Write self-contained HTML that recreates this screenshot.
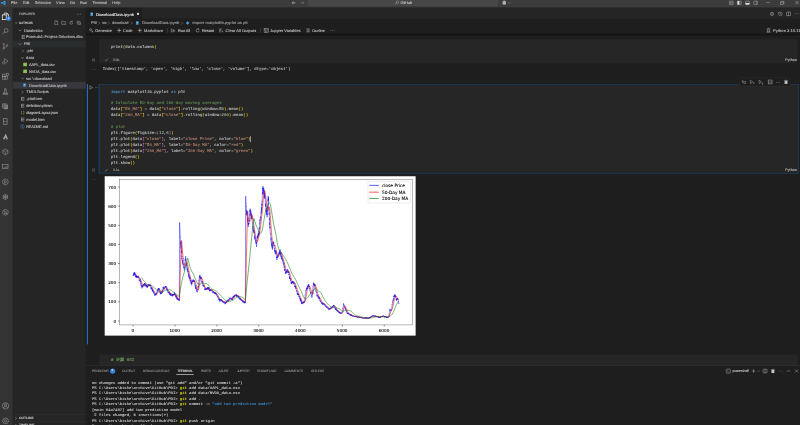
<!DOCTYPE html>
<html lang="en"><head><meta charset="utf-8"><title>DownloadData.ipynb - GitHub - Visual Studio Code</title><style>
html,body{margin:0;padding:0;background:#1e1e1e;overflow:hidden;}
body{width:800px;height:425px;position:relative;}
#app{position:absolute;left:0;top:0;width:2560px;height:1360px;transform:scale(0.3125);transform-origin:0 0;font-family:"Liberation Sans",sans-serif;color:#ccc;overflow:hidden;}
#app div,#app span,#app svg{position:absolute;}
#surface{left:0;top:0;width:2560px;height:1360px;filter:blur(0.4px);}
#app .t{white-space:pre;margin:0;text-rendering:geometricPrecision;-webkit-text-stroke:0.22px currentColor;}
#app .t span{position:static;}
#app .m{font-family:"Liberation Mono",monospace;-webkit-text-stroke-width:0.15px;}
#app .tm{-webkit-text-stroke-width:0.25px;}
#app .dj{font-family:"DejaVu Sans",sans-serif;-webkit-text-stroke-width:0.25px;}
#app .cjk{font-family:"Liberation Mono","Noto Sans CJK SC",monospace;-webkit-text-stroke-width:0.45px;}
#app svg.i{overflow:visible;}
ul,li,figure,header,nav,aside,main,footer,section{margin:0;padding:0;list-style:none;display:block;position:static;}
</style></head><body><div id="app"><div id="surface">
<header id="titlebar">
<div style="left:0px;top:0px;width:2560px;height:25.44px;background:#3c3c3c;"></div>
<svg class="i" viewBox="0 0 16 16" style="left:2.24px;top:1.28px;width:16.64px;height:16.64px;"><path d="M11.6 1.2L5.2 7.1 2.4 5 1.2 5.6v4.8l1.2.6 2.8-2.1 6.4 5.9 3.2-1.4V2.6zM11.6 5v6L7.4 8zM2.4 9.6V6.4L4.2 8z" fill="#2ea3f2"/></svg>
<span class="t" style="left:35.2px;top:-0.88px;font-size:12.6px;line-height:20px;letter-spacing:0.12px;color:#cccccc;">File</span>
<span class="t" style="left:73.28px;top:-0.88px;font-size:12.6px;line-height:20px;letter-spacing:-0.23px;color:#cccccc;">Edit</span>
<span class="t" style="left:111.2px;top:-0.88px;font-size:12.6px;line-height:20px;color:#cccccc;">Selection</span>
<span class="t" style="left:179.2px;top:-0.88px;font-size:12.6px;line-height:20px;letter-spacing:0.43px;color:#cccccc;">View</span>
<span class="t" style="left:224px;top:-0.88px;font-size:12.6px;line-height:20px;letter-spacing:-0.4px;color:#cccccc;">Go</span>
<span class="t" style="left:256px;top:-0.88px;font-size:12.6px;line-height:20px;letter-spacing:-0.35px;color:#cccccc;">Run</span>
<span class="t" style="left:296px;top:-0.88px;font-size:12.6px;line-height:20px;letter-spacing:-0.19px;color:#cccccc;">Terminal</span>
<span class="t" style="left:359.2px;top:-0.88px;font-size:12.6px;line-height:20px;letter-spacing:0.2px;color:#cccccc;">Help</span>
<svg class="i" viewBox="0 0 16 16" style="left:930.56px;top:-0.16px;width:17.92px;height:17.92px;"><path d="M13 8H3.500M7.500 4L3.500 8l4 4" fill="none" stroke="#d4d4d4" stroke-width="1.500"/></svg>
<svg class="i" viewBox="0 0 16 16" style="left:957.76px;top:-0.16px;width:17.92px;height:17.92px;"><path d="M3 8h9.500M8.500 4l4 4-4 4" fill="none" stroke="#858585" stroke-width="1.500"/></svg>
<div style="left:985.6px;top:-6.4px;width:608px;height:26.56px;background:#474747;border-radius:6px;border:1px solid #555;box-sizing:border-box;"></div>
<svg class="i" viewBox="0 0 16 16" style="left:1262.72px;top:1.44px;width:14.72px;height:14.72px;"><circle cx="9.5" cy="6.5" r="4.2" fill="none" stroke="#ccc" stroke-width="1.3"/><path d="M6.5 9.5L2 14" stroke="#ccc" stroke-width="1.4"/></svg>
<span class="t" style="left:1281.92px;top:-0.88px;font-size:12.6px;line-height:20px;letter-spacing:-0.4px;color:#cccccc;">GitHub</span>
<svg class="i" viewBox="0 0 16 16" style="left:1605.44px;top:-0.32px;width:17.28px;height:17.28px;"><path d="M3 7c0-3 2-4.500 5-4.500s5 1.500 5 4.500v4.500c-1.500 1.500-3 2-5 2s-3.500-.5-5-2z" fill="#d0d0d0"/><rect x="5.200" y="7.500" width="1.600" height="2.600" fill="#3c3c3c"/><rect x="9.200" y="7.500" width="1.600" height="2.600" fill="#3c3c3c"/><path d="M3.500 5.500h9" stroke="#3c3c3c" stroke-width="1"/></svg>
<svg class="i" viewBox="0 0 16 16" style="left:1624.64px;top:3.84px;width:10.88px;height:10.88px;"><path d="M3 5.500l5 5 5-5" fill="none" stroke="#bbb" stroke-width="1.600"/></svg>
<svg class="i" viewBox="0 0 16 16" style="left:2332px;top:0.8px;width:16px;height:16px;"><rect x="2" y="2.500" width="12" height="11" rx="1" fill="none" stroke="#bbb" stroke-width="1.200"/><path d="M6 2.500v11M10 2.500v11M2 8h4M10 8h4" stroke="#bbb" stroke-width="1.100"/></svg>
<svg class="i" viewBox="0 0 16 16" style="left:2358.08px;top:0.8px;width:16px;height:16px;"><rect x="2" y="2.500" width="12" height="11" rx="1" fill="none" stroke="#ddd" stroke-width="1.200"/><rect x="2" y="2.500" width="6" height="11" fill="#e4e4e4"/></svg>
<svg class="i" viewBox="0 0 16 16" style="left:2384px;top:0.8px;width:16px;height:16px;"><rect x="2" y="2.500" width="12" height="11" rx="1" fill="none" stroke="#ddd" stroke-width="1.200"/><rect x="2" y="8.500" width="12" height="5" fill="#e4e4e4"/></svg>
<svg class="i" viewBox="0 0 16 16" style="left:2409.92px;top:0.8px;width:16px;height:16px;"><rect x="2" y="2.500" width="12" height="11" rx="1" fill="none" stroke="#ccc" stroke-width="1.200"/><path d="M10 2.500v11" stroke="#ccc" stroke-width="1.200"/></svg>
<div style="left:2450.88px;top:8.16px;width:12.8px;height:1.28px;background:#d0d0d0;"></div>
<svg class="i" viewBox="0 0 16 16" style="left:2495.84px;top:1.6px;width:14.72px;height:14.72px;"><rect x="2.500" y="5" width="8.500" height="8.500" fill="none" stroke="#ccc" stroke-width="1.300"/><path d="M5 5V2.500h8.500V11H11" fill="none" stroke="#ccc" stroke-width="1.300"/></svg>
<svg class="i" viewBox="0 0 16 16" style="left:2542.72px;top:0.96px;width:14.72px;height:14.72px;"><path d="M2.500 2.500l11 11M13.500 2.500l-11 11" stroke="#ddd" stroke-width="1.400"/></svg>
</header>
<nav id="activitybar">
<div style="left:0px;top:24.8px;width:40.96px;height:1335.2px;background:#333333;"></div>
<svg class="i" viewBox="0 0 24 24" style="left:4.48px;top:38.72px;width:26.24px;height:26.24px;"><path d="M9 2.500h7.500l4.500 4.500v11H9z" fill="none" stroke="#fff" stroke-width="2"/><path d="M16 2.500v5h5" fill="none" stroke="#fff" stroke-width="1.600"/><rect x="3" y="8" width="11.500" height="14" fill="#333" stroke="#fff" stroke-width="2"/></svg>
<div style="left:19.84px;top:52.16px;width:15.04px;height:15.04px;background:#3b82e0;border-radius:50%;"></div>
<span class="t" style="left:25.28px;top:49.68px;font-size:6.5px;line-height:20px;color:#fff;">1</span>
<svg class="i" viewBox="0 0 24 24" style="left:5.44px;top:87.9px;width:24.32px;height:24.32px;"><circle cx="14.500" cy="9.500" r="6" fill="none" stroke="#a2a2a2" stroke-width="1.800"/><path d="M10 14l-7 7" stroke="#a2a2a2" stroke-width="2"/></svg>
<svg class="i" viewBox="0 0 24 24" style="left:5.44px;top:136.13px;width:24.32px;height:24.32px;"><circle cx="7" cy="5" r="2.300" fill="none" stroke="#a2a2a2" stroke-width="1.600"/><circle cx="7" cy="19" r="2.300" fill="none" stroke="#a2a2a2" stroke-width="1.600"/><circle cx="17.500" cy="9" r="2.300" fill="none" stroke="#a2a2a2" stroke-width="1.600"/><path d="M7 7.300v9.400M17.500 11.300c0 4-10.500 2-10.500 5.400" fill="none" stroke="#a2a2a2" stroke-width="1.600"/></svg>
<svg class="i" viewBox="0 0 24 24" style="left:5.44px;top:184.35px;width:24.32px;height:24.32px;"><path d="M9 3.500l11.500 8L12 17.500" fill="none" stroke="#a2a2a2" stroke-width="1.700"/><path d="M9 3.500v7" stroke="#a2a2a2" stroke-width="1.700"/><circle cx="7" cy="16.500" r="4" fill="none" stroke="#a2a2a2" stroke-width="1.700"/></svg>
<svg class="i" viewBox="0 0 24 24" style="left:5.44px;top:232.58px;width:24.32px;height:24.32px;"><rect x="3" y="12" width="8" height="8" fill="none" stroke="#a2a2a2" stroke-width="1.600"/><rect x="11" y="12" width="8" height="8" fill="none" stroke="#a2a2a2" stroke-width="1.600"/><rect x="3" y="4" width="8" height="8" fill="none" stroke="#a2a2a2" stroke-width="1.600"/><rect x="14.500" y="1.500" width="7" height="7" fill="none" stroke="#a2a2a2" stroke-width="1.600"/></svg>
<svg class="i" viewBox="0 0 24 24" style="left:5.44px;top:280.8px;width:24.32px;height:24.32px;"><path d="M9 3h6M10 3v7L4.500 20.500h15L14 10V3" fill="none" stroke="#a2a2a2" stroke-width="1.800"/><path d="M6 17h12" stroke="#a2a2a2" stroke-width="2.500"/></svg>
<svg class="i" viewBox="0 0 24 24" style="left:5.44px;top:329.02px;width:24.32px;height:24.32px;"><rect x="7.500" y="7" width="13" height="13" rx="1" fill="#a2a2a2" opacity=".55"/><rect x="5" y="5" width="13" height="13" rx="1" fill="none" stroke="#a2a2a2" stroke-width="1.500"/><path d="M3 16V3h13" fill="none" stroke="#a2a2a2" stroke-width="1.500"/></svg>
<svg class="i" viewBox="0 0 24 24" style="left:5.44px;top:377.25px;width:24.32px;height:24.32px;"><rect x="6.500" y="3" width="11" height="18" fill="none" stroke="#a2a2a2" stroke-width="1.700"/><path d="M6.500 12h11" stroke="#a2a2a2" stroke-width="1.500"/></svg>
<svg class="i" viewBox="0 0 24 24" style="left:5.44px;top:425.47px;width:24.32px;height:24.32px;"><path d="M13 3L4 20.500h5.500l3-6 3.500 4-5 2h9.500L13.500 3z" fill="#a2a2a2"/></svg>
<svg class="i" viewBox="0 0 24 24" style="left:5.44px;top:473.7px;width:24.32px;height:24.32px;"><path d="M12 3l8 4.500v9L12 21l-8-4.500v-9z" fill="none" stroke="#a2a2a2" stroke-width="1.700"/><path d="M4 7.500l8 4.500 8-4.500M12 12v9" fill="none" stroke="#a2a2a2" stroke-width="1.300"/></svg>
<svg class="i" viewBox="0 0 24 24" style="left:5.44px;top:521.92px;width:24.32px;height:24.32px;"><rect x="3.500" y="5" width="17" height="12.500" fill="none" stroke="#a2a2a2" stroke-width="1.600"/><path d="M8 15v-2M11 15v-4M14 15v-3M17 15V8.500" stroke="#a2a2a2" stroke-width="1.700"/></svg>
<svg class="i" viewBox="0 0 24 24" style="left:5.44px;top:570.14px;width:24.32px;height:24.32px;"><circle cx="12" cy="12" r="9" fill="none" stroke="#a2a2a2" stroke-width="1.600"/><path d="M9.500 7l7 5-7 5z" fill="none" stroke="#a2a2a2" stroke-width="1.500"/></svg>
<svg class="i" viewBox="0 0 24 24" style="left:5.44px;top:618.37px;width:24.32px;height:24.32px;"><path d="M12 2.500v19M3.800 7.200l16.400 9.600M3.800 16.800l16.400-9.600M9 3.500l3 3 3-3M9 20.500l3-3 3 3M3.500 11l3.800-1-1-3.800M20.500 13l-3.800 1 1 3.800M3.500 13l3.800 1-1 3.800M20.500 11l-3.800-1 1-3.800" fill="none" stroke="#a2a2a2" stroke-width="1.600"/></svg>
<svg class="i" viewBox="0 0 24 24" style="left:5.44px;top:666.59px;width:24.32px;height:24.32px;"><circle cx="12" cy="12" r="9" fill="none" stroke="#a2a2a2" stroke-width="1.600"/><path d="M9 7l7 5-7 5z" fill="none" stroke="#a2a2a2" stroke-width="1.500"/><path d="M13 15h5v3h-5z" fill="#a2a2a2"/></svg>
<svg class="i" viewBox="0 0 24 24" style="left:4.8px;top:1285.6px;width:25.6px;height:25.6px;"><circle cx="12" cy="12" r="9.500" fill="none" stroke="#a2a2a2" stroke-width="1.600"/><circle cx="12" cy="9.500" r="3.300" fill="none" stroke="#a2a2a2" stroke-width="1.600"/><path d="M5.500 18.500c1.500-3.500 4-4.500 6.500-4.500s5 1 6.500 4.500" fill="none" stroke="#a2a2a2" stroke-width="1.600"/></svg>
<svg class="i" viewBox="0 0 24 24" style="left:4.8px;top:1334.4px;width:25.6px;height:25.6px;"><circle cx="12" cy="12" r="3.200" fill="none" stroke="#a2a2a2" stroke-width="1.600"/><path d="M12 2.500l2 2.600 3.200-.8 .8 3.200 3 1.300-1.400 3.200 1.400 3.200-3 1.300-.8 3.200-3.200-.8-2 2.600-2-2.600-3.200.8-.8-3.200-3-1.300L4.400 12 3 8.800l3-1.300.8-3.200 3.200.8z" fill="none" stroke="#a2a2a2" stroke-width="1.500"/></svg>
</nav>
<aside id="sidebar">
<div style="left:40.96px;top:24.8px;width:234.24px;height:1335.2px;background:#252526;"></div>
<span class="t" style="left:60.8px;top:35.12px;font-size:10.7px;line-height:20px;letter-spacing:-0.88px;color:#bbbbbb;">EXPLORER</span>
<svg class="i" viewBox="0 0 16 16" style="left:244px;top:37.12px;width:16px;height:16px;"><circle cx="3" cy="8" r="1.200" fill="#c5c5c5"/><circle cx="8" cy="8" r="1.200" fill="#c5c5c5"/><circle cx="13" cy="8" r="1.200" fill="#c5c5c5"/></svg>
<svg class="i" viewBox="0 0 16 16" style="left:44px;top:64.96px;width:16px;height:16px;"><path d="M3.500 5.800l4.500 4.500 4.500-4.500" fill="none" stroke="#c5c5c5" stroke-width="1.300"/></svg>
<span class="t" style="left:61.12px;top:62.96px;font-size:10.7px;line-height:20px;letter-spacing:0.44px;color:#cccccc;font-weight:bold;">GITHUB</span>
<svg class="i" viewBox="0 0 16 16" style="left:172px;top:64.96px;width:16px;height:16px;"><path d="M9.500 1.500H3.500v12h5M9.500 1.500l3 3v4M9.500 1.500v3h3" fill="none" stroke="#d8d8d8" stroke-width="1.100"/><path d="M12 10v5M9.500 12.500h5" stroke="#d8d8d8" stroke-width="1.100"/></svg>
<svg class="i" viewBox="0 0 16 16" style="left:196px;top:64.96px;width:16px;height:16px;"><path d="M14 9V4.500H7.500l-1-1.500H1.500v10h8" fill="none" stroke="#d8d8d8" stroke-width="1.100"/><path d="M12.500 10v5M10 12.500h5" stroke="#d8d8d8" stroke-width="1.100"/></svg>
<svg class="i" viewBox="0 0 16 16" style="left:220px;top:64.96px;width:16px;height:16px;"><path d="M12.500 8a4.500 4.500 0 1 1-1.500-3.400" fill="none" stroke="#d8d8d8" stroke-width="1.200"/><path d="M11.500 1.500v3.500H8" fill="none" stroke="#d8d8d8" stroke-width="1.200"/></svg>
<svg class="i" viewBox="0 0 16 16" style="left:244px;top:64.96px;width:16px;height:16px;"><path d="M5.500 5.500h8v8h-8z" fill="none" stroke="#d8d8d8" stroke-width="1.100"/><path d="M3 10.500V3h7.500" fill="none" stroke="#d8d8d8" stroke-width="1.100"/><path d="M7.500 9.500h4" stroke="#d8d8d8" stroke-width="1.100"/></svg>
<div style="left:40.96px;top:129.63px;width:234.24px;height:22.02px;background:#2a2d2e;"></div>
<div style="left:40.96px;top:261.63px;width:234.24px;height:22.02px;background:#37373d;"></div>
<ul class="tree">
<li>
<svg class="i" viewBox="0 0 16 16" style="left:56px;top:88.64px;width:16px;height:16px;"><path d="M3.500 5.800l4.500 4.500 4.500-4.500" fill="none" stroke="#c5c5c5" stroke-width="1.300"/></svg>
<span class="t" style="left:76.8px;top:86.64px;font-size:12.6px;line-height:20px;letter-spacing:-0.03px;color:#cccccc;">Databricks</span>
</li>
<li>
<svg class="i" viewBox="0 0 16 16" style="left:65.6px;top:110.32px;width:16.64px;height:16.64px;"><path d="M4 3.500h9.500M4 8h9.500M4 12.500h9.500" stroke="#c8cbca" stroke-width="1.500"/><path d="M4.600 3v10" stroke="#c8cbca" stroke-width="1.400"/></svg>
<span class="t" style="left:83.2px;top:108.64px;font-size:12.6px;line-height:20px;letter-spacing:0.17px;color:#cccccc;">Formula1-Project-Solutions.dbc</span>
</li>
<li>
<svg class="i" viewBox="0 0 16 16" style="left:56px;top:132.64px;width:16px;height:16px;"><path d="M3.500 5.800l4.500 4.500 4.500-4.500" fill="none" stroke="#c5c5c5" stroke-width="1.300"/></svg>
<span class="t" style="left:76.8px;top:130.64px;font-size:12.6px;line-height:20px;letter-spacing:-0.7px;color:#cccccc;">PBI</span>
</li>
<li>
<svg class="i" viewBox="0 0 16 16" style="left:64.64px;top:154.64px;width:16px;height:16px;"><path d="M5.800 3.500l4.500 4.500-4.500 4.500" fill="none" stroke="#c5c5c5" stroke-width="1.300"/></svg>
<span class="t" style="left:84px;top:152.64px;font-size:12.6px;line-height:20px;letter-spacing:0.32px;color:#cccccc;">.pbi</span>
</li>
<li>
<svg class="i" viewBox="0 0 16 16" style="left:64px;top:176.64px;width:16px;height:16px;"><path d="M3.500 5.800l4.500 4.500 4.500-4.500" fill="none" stroke="#c5c5c5" stroke-width="1.300"/></svg>
<span class="t" style="left:83.2px;top:174.64px;font-size:12.6px;line-height:20px;letter-spacing:0.7px;color:#cccccc;">data</span>
</li>
<li>
<svg class="i" viewBox="0 0 16 16" style="left:72.64px;top:199.28px;width:14.72px;height:14.72px;"><rect x="1.500" y="2" width="13" height="12" fill="#86b84a"/><path d="M1.500 6h13M1.500 10h13M6 2v12M10.500 2v12" stroke="#a5d566" stroke-width=".8"/></svg>
<span class="t" style="left:92.8px;top:196.64px;font-size:12.6px;line-height:20px;letter-spacing:-0.33px;color:#cccccc;">AAPL_data.csv</span>
</li>
<li>
<svg class="i" viewBox="0 0 16 16" style="left:72.64px;top:221.28px;width:14.72px;height:14.72px;"><rect x="1.500" y="2" width="13" height="12" fill="#86b84a"/><path d="M1.500 6h13M1.500 10h13M6 2v12M10.500 2v12" stroke="#a5d566" stroke-width=".8"/></svg>
<span class="t" style="left:92.8px;top:218.64px;font-size:12.6px;line-height:20px;letter-spacing:-0.22px;color:#cccccc;">NVDA_data.csv</span>
</li>
<li>
<svg class="i" viewBox="0 0 16 16" style="left:64px;top:242.64px;width:16px;height:16px;"><path d="M3.500 5.800l4.500 4.500 4.500-4.500" fill="none" stroke="#c5c5c5" stroke-width="1.300"/></svg>
<span class="t" style="left:83.2px;top:240.64px;font-size:12.6px;line-height:20px;letter-spacing:0.05px;color:#cccccc;">src \ download</span>
</li>
<li>
<svg class="i" viewBox="0 0 16 16" style="left:72.16px;top:266.08px;width:13.12px;height:13.12px;"><rect x="3" y="1.500" width="10" height="13" rx="1.500" fill="#4a97d2"/><rect x="5.500" y="4" width="5" height="3" fill="#b5d6ef"/></svg>
<span class="t" style="left:92.8px;top:262.64px;font-size:12.6px;line-height:20px;letter-spacing:0.28px;color:#cccccc;">DownloadData.ipynb</span>
</li>
<li>
<svg class="i" viewBox="0 0 16 16" style="left:64px;top:286.64px;width:16px;height:16px;"><path d="M5.800 3.500l4.500 4.500-4.500 4.500" fill="none" stroke="#c5c5c5" stroke-width="1.300"/></svg>
<span class="t" style="left:84px;top:284.64px;font-size:12.6px;line-height:20px;letter-spacing:-0.07px;color:#cccccc;">TMDLScripts</span>
</li>
<li>
<svg class="i" viewBox="0 0 16 16" style="left:64.32px;top:308.32px;width:16.64px;height:16.64px;"><path d="M4 3.500h9.500M4 8h9.500M4 12.500h9.500" stroke="#c8cbca" stroke-width="1.500"/><path d="M4.600 3v10" stroke="#c8cbca" stroke-width="1.400"/></svg>
<span class="t" style="left:84px;top:306.64px;font-size:12.6px;line-height:20px;letter-spacing:0.33px;color:#cccccc;">.platform</span>
</li>
<li>
<svg class="i" viewBox="0 0 16 16" style="left:64.32px;top:330.32px;width:16.64px;height:16.64px;"><path d="M4 3.500h9.500M4 8h9.500M4 12.500h9.500" stroke="#c8cbca" stroke-width="1.500"/><path d="M4.600 3v10" stroke="#c8cbca" stroke-width="1.400"/></svg>
<span class="t" style="left:84px;top:328.64px;font-size:12.6px;line-height:20px;letter-spacing:-0.22px;color:#cccccc;">definition.pbism</span>
</li>
<li>
<svg class="i" viewBox="0 0 16 16" style="left:64.64px;top:353.28px;width:14.72px;height:14.72px;"><path d="M6 2.500c-2 0-2 1-2 2.500s0 2.500-1.500 3c1.500.5 1.500 1.500 1.500 3s0 2.500 2 2.500M10 2.500c2 0 2 1 2 2.500s0 2.500 1.500 3c-1.500.5-1.500 1.500-1.500 3s0 2.500-2 2.500" fill="none" stroke="#cbcb41" stroke-width="1.600"/></svg>
<span class="t" style="left:84px;top:350.64px;font-size:12.6px;line-height:20px;letter-spacing:-0.5px;color:#cccccc;">diagramLayout.json</span>
</li>
<li>
<svg class="i" viewBox="0 0 16 16" style="left:64.32px;top:374.32px;width:16.64px;height:16.64px;"><path d="M4 3.500h9.500M4 8h9.500M4 12.500h9.500" stroke="#c8cbca" stroke-width="1.500"/><path d="M4.600 3v10" stroke="#c8cbca" stroke-width="1.400"/></svg>
<span class="t" style="left:84px;top:372.64px;font-size:12.6px;line-height:20px;letter-spacing:0.07px;color:#cccccc;">model.bim</span>
</li>
<li>
<svg class="i" viewBox="0 0 16 16" style="left:63.68px;top:396.96px;width:15.36px;height:15.36px;"><circle cx="8" cy="8" r="6" fill="none" stroke="#4fa0dc" stroke-width="1.300"/><path d="M8 7v4.500" stroke="#4fa0dc" stroke-width="1.500"/><circle cx="8" cy="4.800" r=".9" fill="#4fa0dc"/></svg>
<span class="t" style="left:84px;top:394.64px;font-size:12.6px;line-height:20px;letter-spacing:-0.7px;color:#cccccc;">README.md</span>
</li>
</ul>
<div style="left:40.96px;top:1326.08px;width:234.24px;height:0.96px;background:#3c3c3c;"></div>
<svg class="i" viewBox="0 0 16 16" style="left:42.88px;top:1331.2px;width:16px;height:16px;"><path d="M5.800 3.500l4.500 4.500-4.500 4.500" fill="none" stroke="#c5c5c5" stroke-width="1.300"/></svg>
<span class="t" style="left:60.8px;top:1329.2px;font-size:10.7px;line-height:20px;letter-spacing:0.03px;color:#cccccc;font-weight:bold;">OUTLINE</span>
<div style="left:40.96px;top:1348.16px;width:234.24px;height:0.96px;background:#3c3c3c;"></div>
<svg class="i" viewBox="0 0 16 16" style="left:42.88px;top:1353.28px;width:16px;height:16px;"><path d="M5.800 3.500l4.500 4.500-4.500 4.500" fill="none" stroke="#c5c5c5" stroke-width="1.300"/></svg>
<span class="t" style="left:60.8px;top:1351.28px;font-size:10.7px;line-height:20px;color:#cccccc;font-weight:bold;">TIMELINE</span>
</aside>
<main id="editor">
<div style="left:275.2px;top:24.8px;width:2284.8px;height:1335.2px;background:#1e1e1e;"></div>
<div style="left:275.2px;top:24.8px;width:2284.8px;height:35.2px;background:#252526;"></div>
<div style="left:275.84px;top:24.8px;width:178.56px;height:35.2px;background:#1e1e1e;"></div>
<svg class="i" viewBox="0 0 16 16" style="left:286.56px;top:38.56px;width:13.12px;height:13.12px;"><rect x="3" y="1.500" width="10" height="13" rx="1.500" fill="#4a97d2"/><rect x="5.500" y="4" width="5" height="3" fill="#b5d6ef"/></svg>
<span class="t" style="left:306.88px;top:36.88px;font-size:12.6px;line-height:20px;letter-spacing:0.31px;color:#f0f0f0;-webkit-text-stroke-width:0.3px;">DownloadData.ipynb</span>
<div style="left:437.6px;top:41.12px;width:7.36px;height:7.36px;background:#e4e4e4;border-radius:50%;"></div>
<svg class="i" viewBox="0 0 16 16" style="left:2462.4px;top:35.68px;width:16.64px;height:16.64px;"><circle cx="8" cy="8.500" r="5" fill="none" stroke="#c5c5c5" stroke-width="1.300"/><circle cx="8" cy="8.500" r="1.800" fill="#c5c5c5"/><path d="M8 1.500v2.500" stroke="#c5c5c5" stroke-width="1.500"/></svg>
<svg class="i" viewBox="0 0 16 16" style="left:2488.96px;top:35.68px;width:16.64px;height:16.64px;"><path d="M3.200 5.500A5.500 5.500 0 1 1 2.500 8.500" fill="none" stroke="#c5c5c5" stroke-width="1.300"/><path d="M1.500 2.500v3.500h3.500" fill="none" stroke="#c5c5c5" stroke-width="1.300"/><path d="M8 5v3.500l2.500 1.500" fill="none" stroke="#c5c5c5" stroke-width="1.200"/></svg>
<svg class="i" viewBox="0 0 16 16" style="left:2514.88px;top:35.68px;width:16.64px;height:16.64px;"><rect x="2" y="2.500" width="12" height="11" rx="1" fill="none" stroke="#c5c5c5" stroke-width="1.300"/><path d="M8 2.500v11" stroke="#c5c5c5" stroke-width="1.300"/></svg>
<svg class="i" viewBox="0 0 16 16" style="left:2542.08px;top:36px;width:16px;height:16px;"><circle cx="3" cy="8" r="1.100" fill="#c5c5c5"/><circle cx="8" cy="8" r="1.100" fill="#c5c5c5"/><circle cx="13" cy="8" r="1.100" fill="#c5c5c5"/></svg>
<span class="t" style="left:291.2px;top:63.28px;font-size:12.6px;line-height:20px;letter-spacing:-0.7px;color:#a9a9a9;-webkit-text-stroke-width:0.3px;">PBI</span>
<svg class="i" viewBox="0 0 16 16" style="left:308.8px;top:65.6px;width:16px;height:16px;"><path d="M5.800 3.500l4.500 4.500-4.500 4.500" fill="none" stroke="#9a9a9a" stroke-width="1.300"/></svg>
<span class="t" style="left:326.08px;top:63.28px;font-size:12.6px;line-height:20px;letter-spacing:-0.7px;color:#a9a9a9;-webkit-text-stroke-width:0.3px;">src</span>
<svg class="i" viewBox="0 0 16 16" style="left:340.48px;top:65.6px;width:16px;height:16px;"><path d="M5.800 3.500l4.500 4.500-4.500 4.500" fill="none" stroke="#9a9a9a" stroke-width="1.300"/></svg>
<span class="t" style="left:358.08px;top:63.28px;font-size:12.6px;line-height:20px;letter-spacing:-0.1px;color:#a9a9a9;-webkit-text-stroke-width:0.3px;">download</span>
<svg class="i" viewBox="0 0 16 16" style="left:413.12px;top:65.6px;width:16px;height:16px;"><path d="M5.800 3.500l4.500 4.500-4.500 4.500" fill="none" stroke="#9a9a9a" stroke-width="1.300"/></svg>
<svg class="i" viewBox="0 0 16 16" style="left:432.8px;top:66.72px;width:13.12px;height:13.12px;"><rect x="3" y="1.500" width="10" height="13" rx="1.500" fill="#4a97d2"/><rect x="5.500" y="4" width="5" height="3" fill="#b5d6ef"/></svg>
<span class="t" style="left:454.08px;top:63.28px;font-size:12.6px;line-height:20px;letter-spacing:0.17px;color:#a9a9a9;-webkit-text-stroke-width:0.3px;">DownloadData.ipynb</span>
<svg class="i" viewBox="0 0 16 16" style="left:574.08px;top:65.6px;width:16px;height:16px;"><path d="M5.800 3.500l4.500 4.500-4.500 4.500" fill="none" stroke="#9a9a9a" stroke-width="1.300"/></svg>
<svg class="i" viewBox="0 0 16 16" style="left:592.64px;top:65.92px;width:14.72px;height:14.72px;"><path d="M8 2l6 6-6 6-6-6z" fill="#4fa0dc"/></svg>
<span class="t" style="left:616px;top:63.28px;font-size:12.6px;line-height:20px;letter-spacing:0.44px;color:#a9a9a9;-webkit-text-stroke-width:0.3px;">import matplotlib.pyplot as plt</span>
<svg class="i" viewBox="0 0 16 16" style="left:284.48px;top:88.96px;width:16.64px;height:16.64px;"><path d="M6 1.500l1.300 3.200 3.200 1.300-3.200 1.300L6 10.500 4.700 7.300 1.500 6l3.200-1.300z" fill="none" stroke="#cccccc" stroke-width="1.100"/><path d="M11.500 9l.9 2.100 2.100.9-2.100.9-.9 2.100-.9-2.100-2.100-.9 2.100-.9z" fill="#cccccc"/></svg>
<span class="t" style="left:304.8px;top:87.28px;font-size:12.6px;line-height:20px;letter-spacing:0.09px;color:#cccccc;">Generate</span>
<svg class="i" viewBox="0 0 16 16" style="left:372.8px;top:88.96px;width:16.64px;height:16.64px;"><path d="M8 2v12M2 8h12" stroke="#dcdcdc" stroke-width="1.600"/></svg>
<span class="t" style="left:393.92px;top:87.28px;font-size:12.6px;line-height:20px;color:#cccccc;">Code</span>
<svg class="i" viewBox="0 0 16 16" style="left:438.88px;top:88.96px;width:16.64px;height:16.64px;"><path d="M8 2v12M2 8h12" stroke="#dcdcdc" stroke-width="1.600"/></svg>
<span class="t" style="left:460.8px;top:87.28px;font-size:12.6px;line-height:20px;letter-spacing:0.37px;color:#cccccc;">Markdown</span>
<div style="left:535.52px;top:89.92px;width:0.96px;height:15.04px;background:#6a6a6a;"></div>
<svg class="i" viewBox="0 0 16 16" style="left:545.92px;top:88.64px;width:17.28px;height:17.28px;"><path d="M2 3l6 5-6 5z" fill="none" stroke="#cccccc" stroke-width="1.200"/><path d="M8.500 5.500l5 3.500-5 3.500z" fill="none" stroke="#cccccc" stroke-width="1.100"/></svg>
<span class="t" style="left:569.6px;top:87.28px;font-size:12.6px;line-height:20px;letter-spacing:-0.22px;color:#cccccc;">Run All</span>
<svg class="i" viewBox="0 0 16 16" style="left:623.68px;top:88.96px;width:16.64px;height:16.64px;"><path d="M12.800 8a4.800 4.800 0 1 1-1.600-3.600" fill="none" stroke="#cccccc" stroke-width="1.300"/><path d="M11.800 1.200v3.600H8.200" fill="none" stroke="#cccccc" stroke-width="1.300"/></svg>
<span class="t" style="left:646.08px;top:87.28px;font-size:12.6px;line-height:20px;letter-spacing:-0.27px;color:#cccccc;">Restart</span>
<svg class="i" viewBox="0 0 16 16" style="left:698.88px;top:88.96px;width:16.64px;height:16.64px;"><path d="M2 3.500h8M2 6.500h8M2 9.500h5M2 12.500h5" stroke="#cccccc" stroke-width="1.300"/><path d="M9.500 9l4.500 4.500M14 9l-4.500 4.500" stroke="#cccccc" stroke-width="1.200"/></svg>
<span class="t" style="left:721.92px;top:87.28px;font-size:12.6px;line-height:20px;letter-spacing:0.21px;color:#cccccc;">Clear All Outputs</span>
<div style="left:832.32px;top:89.92px;width:0.96px;height:15.04px;background:#6a6a6a;"></div>
<svg class="i" viewBox="0 0 16 16" style="left:843.36px;top:88.64px;width:17.28px;height:17.28px;"><rect x="2" y="2" width="12" height="12" fill="none" stroke="#cccccc" stroke-width="1.200"/><path d="M2 5.500h12M6.500 5.500V14M6.500 9.800H14" stroke="#cccccc" stroke-width="1.100"/></svg>
<span class="t" style="left:864.8px;top:87.28px;font-size:12.6px;line-height:20px;letter-spacing:0.04px;color:#cccccc;">Jupyter Variables</span>
<svg class="i" viewBox="0 0 16 16" style="left:977.28px;top:88.96px;width:16.64px;height:16.64px;"><path d="M2.500 3.500h11M5 6.500h8.500M5 9.500h8.500M2.500 12.500h11" stroke="#cccccc" stroke-width="1.300"/></svg>
<span class="t" style="left:999.2px;top:87.28px;font-size:12.6px;line-height:20px;letter-spacing:0.13px;color:#cccccc;">Outline</span>
<svg class="i" viewBox="0 0 16 16" style="left:1056px;top:89.28px;width:16px;height:16px;"><circle cx="3" cy="8" r="1.100" fill="#cccccc"/><circle cx="8" cy="8" r="1.100" fill="#cccccc"/><circle cx="13" cy="8" r="1.100" fill="#cccccc"/></svg>
<svg class="i" viewBox="0 0 16 16" style="left:2450.88px;top:89.28px;width:16.64px;height:16.64px;"><rect x="4" y="2" width="8" height="8" rx="1" fill="none" stroke="#cccccc" stroke-width="1.300"/><path d="M2 13.500h12M5 10v3.500M11 10v3.500" stroke="#cccccc" stroke-width="1.300"/><path d="M6 4.500h4" stroke="#cccccc" stroke-width="1.100"/></svg>
<span class="t" style="left:2473.92px;top:87.6px;font-size:12.6px;line-height:20px;letter-spacing:0.3px;color:#cccccc;">Python 3.10.11</span>
<div style="left:275.2px;top:107.52px;width:2284.8px;height:8.32px;background:linear-gradient(#0f0f0f,rgba(30,30,30,0));"></div>
<section class="cell">
<div style="left:316.8px;top:125.12px;width:2235.2px;height:77.44px;background:#262627;"></div>
<div class="t m" style="left:354.88px;top:139.6px;font-size:12.83px;line-height:20px;"><span style="color:#d4d4d4">print</span><span style="color:#ffd700">(</span><span style="color:#d4d4d4">data</span><span style="color:#d4d4d4">.columns</span><span style="color:#ffd700">)</span></div>
<span class="t" style="left:293.6px;top:181.2px;font-size:10.8px;line-height:20px;letter-spacing:-0.7px;color:#6c6c6c;-webkit-text-stroke-width:0.2px;">[6]</span>
<svg class="i" viewBox="0 0 16 16" style="left:333.44px;top:183.68px;width:14.72px;height:14.72px;"><path d="M2.500 8.500l3.500 3.500 7.500-8" fill="none" stroke="#b8b8b8" stroke-width="1.400"/></svg>
<span class="t" style="left:361.6px;top:181.2px;font-size:11.6px;line-height:20px;letter-spacing:-0.48px;color:#a6a6a6;">0.0s</span>
<span class="t" style="left:2512.8px;top:181.2px;font-size:11.6px;line-height:20px;letter-spacing:0.19px;color:#cccccc;">Python</span>
<svg class="i" viewBox="0 0 16 16" style="left:292.16px;top:214.08px;width:14.72px;height:14.72px;"><circle cx="2.500" cy="8" r="1" fill="#9a9a9a"/><circle cx="8" cy="8" r="1" fill="#9a9a9a"/><circle cx="13.500" cy="8" r="1" fill="#9a9a9a"/></svg>
<div class="t m" style="left:328.8px;top:212.08px;font-size:12.83px;line-height:20px;"><span style="color:#cccccc">Index(['timestamp', 'open', 'high', 'low', 'close', 'volume'], dtype='object')</span></div>
</section>
<section class="cell focused">
<div style="left:277.6px;top:269.12px;width:3.68px;height:832.96px;background:#2f7fd0;"></div>
<div style="left:316.8px;top:269.12px;width:2238.72px;height:285.44px;background:#262627;"></div>
<div style="left:316.8px;top:268.64px;width:2238.72px;height:1.44px;background:#0f5ea8;"></div>
<div style="left:316.8px;top:553.6px;width:2238.72px;height:1.44px;background:#0f5ea8;"></div>
<div style="left:316.32px;top:268.64px;width:1.44px;height:286.4px;background:#0f5ea8;"></div>
<div style="left:2554.56px;top:268.64px;width:1.44px;height:286.4px;background:#0f5ea8;"></div>
<div style="left:2366.08px;top:248px;width:163.84px;height:28.16px;background:#1e1e1e;border:1px solid #3a3a3a;box-sizing:border-box;border-radius:3px;"></div>
<svg class="i" viewBox="0 0 16 16" style="left:2372px;top:254.72px;width:16px;height:16px;"><path d="M2 3h5M2 6h5M2 9h3" stroke="#c0c0c0" stroke-width="1.300"/><path d="M8 5.500l6 0v7h-6z" fill="none" stroke="#c0c0c0" stroke-width="1.200"/></svg>
<svg class="i" viewBox="0 0 16 16" style="left:2399.36px;top:254.08px;width:17.28px;height:17.28px;"><path d="M2 2.500l7 5-7 5z" fill="none" stroke="#c0c0c0" stroke-width="1.200"/><path d="M10 10h4M12 10v4" stroke="#c0c0c0" stroke-width="1.200"/></svg>
<svg class="i" viewBox="0 0 16 16" style="left:2427.36px;top:254.08px;width:17.28px;height:17.28px;"><path d="M2 2.500l7 5-7 5z" fill="none" stroke="#c0c0c0" stroke-width="1.200"/><path d="M10 14h4M12 10v4" stroke="#c0c0c0" stroke-width="1.200"/></svg>
<svg class="i" viewBox="0 0 16 16" style="left:2456.48px;top:254.4px;width:16.64px;height:16.64px;"><rect x="2" y="2" width="12" height="12" fill="none" stroke="#c0c0c0" stroke-width="1.300"/><path d="M2 8h12" stroke="#c0c0c0" stroke-width="1.300"/></svg>
<svg class="i" viewBox="0 0 16 16" style="left:2481.92px;top:254.72px;width:16px;height:16px;"><circle cx="3" cy="8" r="1.100" fill="#c0c0c0"/><circle cx="8" cy="8" r="1.100" fill="#c0c0c0"/><circle cx="13" cy="8" r="1.100" fill="#c0c0c0"/></svg>
<svg class="i" viewBox="0 0 16 16" style="left:2506.88px;top:254.4px;width:16.64px;height:16.64px;"><path d="M3.500 4.500h9v9.500h-9z" fill="#c0c0c0"/><path d="M2 4h12M6 2.500h4" stroke="#c0c0c0" stroke-width="1.300"/></svg>
<svg class="i" viewBox="0 0 16 16" style="left:284px;top:272px;width:16px;height:16px;"><path d="M3.500 2.500l9 5.500-9 5.500z" fill="none" stroke="#c5c5c5" stroke-width="1.300"/></svg>
<svg class="i" viewBox="0 0 16 16" style="left:303.36px;top:275.2px;width:10.88px;height:10.88px;"><path d="M3 5.500l5 5 5-5" fill="none" stroke="#b0b0b0" stroke-width="1.700"/></svg>
<div class="t m" style="left:354.88px;top:283.44px;font-size:12.83px;line-height:20px;"><span style="color:#569cd6">import</span><span style="color:#d4d4d4"> </span><span style="color:#d4d4d4">matplotlib</span><span style="color:#d4d4d4">.</span><span style="color:#d4d4d4">pyplot</span><span style="color:#d4d4d4"> </span><span style="color:#569cd6">as</span><span style="color:#d4d4d4"> </span><span style="color:#d4d4d4">plt</span></div>
<div class="t m" style="left:354.88px;top:321.44px;font-size:12.83px;line-height:20px;"><span style="color:#6a9955"># Calculate 50-day and 200-day moving averages</span></div>
<div class="t m" style="left:354.88px;top:340.44px;font-size:12.83px;line-height:20px;"><span style="color:#d4d4d4">data</span><span style="color:#ffd700">[</span><span style="color:#ce9178">"50_MA"</span><span style="color:#ffd700">]</span><span style="color:#d4d4d4"> = </span><span style="color:#d4d4d4">data</span><span style="color:#ffd700">[</span><span style="color:#ce9178">"close"</span><span style="color:#ffd700">]</span><span style="color:#d4d4d4">.</span><span style="color:#d4d4d4">rolling</span><span style="color:#ffd700">(</span><span style="color:#d4d4d4">window</span><span style="color:#d4d4d4">=</span><span style="color:#b5cea8">50</span><span style="color:#ffd700">)</span><span style="color:#d4d4d4">.</span><span style="color:#d4d4d4">mean</span><span style="color:#ffd700">()</span></div>
<div class="t m" style="left:354.88px;top:359.44px;font-size:12.83px;line-height:20px;"><span style="color:#d4d4d4">data</span><span style="color:#ffd700">[</span><span style="color:#ce9178">"200_MA"</span><span style="color:#ffd700">]</span><span style="color:#d4d4d4"> = </span><span style="color:#d4d4d4">data</span><span style="color:#ffd700">[</span><span style="color:#ce9178">"close"</span><span style="color:#ffd700">]</span><span style="color:#d4d4d4">.</span><span style="color:#d4d4d4">rolling</span><span style="color:#ffd700">(</span><span style="color:#d4d4d4">window</span><span style="color:#d4d4d4">=</span><span style="color:#b5cea8">200</span><span style="color:#ffd700">)</span><span style="color:#d4d4d4">.</span><span style="color:#d4d4d4">mean</span><span style="color:#ffd700">()</span></div>
<div class="t m" style="left:354.88px;top:397.44px;font-size:12.83px;line-height:20px;"><span style="color:#6a9955"># plot</span></div>
<div class="t m" style="left:354.88px;top:416.44px;font-size:12.83px;line-height:20px;"><span style="color:#d4d4d4">plt</span><span style="color:#d4d4d4">.</span><span style="color:#d4d4d4">figure</span><span style="color:#ffd700">(</span><span style="color:#d4d4d4">figsize</span><span style="color:#d4d4d4">=</span><span style="color:#da70d6">(</span><span style="color:#b5cea8">12</span><span style="color:#d4d4d4">,</span><span style="color:#b5cea8">6</span><span style="color:#da70d6">)</span><span style="color:#ffd700">)</span></div>
<div class="t m" style="left:354.88px;top:435.44px;font-size:12.83px;line-height:20px;"><span style="color:#d4d4d4">plt</span><span style="color:#d4d4d4">.</span><span style="color:#d4d4d4">plot</span><span style="color:#ffd700">(</span><span style="color:#d4d4d4">data</span><span style="color:#da70d6">[</span><span style="color:#ce9178">"close"</span><span style="color:#da70d6">]</span><span style="color:#d4d4d4">, </span><span style="color:#d4d4d4">label</span><span style="color:#d4d4d4">=</span><span style="color:#ce9178">"close Price"</span><span style="color:#d4d4d4">, </span><span style="color:#d4d4d4">color</span><span style="color:#d4d4d4">=</span><span style="color:#ce9178">"blue"</span><span style="color:#ffd700">)</span></div>
<div class="t m" style="left:354.88px;top:454.44px;font-size:12.83px;line-height:20px;"><span style="color:#d4d4d4">plt</span><span style="color:#d4d4d4">.</span><span style="color:#d4d4d4">plot</span><span style="color:#ffd700">(</span><span style="color:#d4d4d4">data</span><span style="color:#da70d6">[</span><span style="color:#ce9178">"50_MA"</span><span style="color:#da70d6">]</span><span style="color:#d4d4d4">, </span><span style="color:#d4d4d4">label</span><span style="color:#d4d4d4">=</span><span style="color:#ce9178">"50-Day MA"</span><span style="color:#d4d4d4">, </span><span style="color:#d4d4d4">color</span><span style="color:#d4d4d4">=</span><span style="color:#ce9178">"red"</span><span style="color:#ffd700">)</span></div>
<div class="t m" style="left:354.88px;top:473.44px;font-size:12.83px;line-height:20px;"><span style="color:#d4d4d4">plt</span><span style="color:#d4d4d4">.</span><span style="color:#d4d4d4">plot</span><span style="color:#ffd700">(</span><span style="color:#d4d4d4">data</span><span style="color:#da70d6">[</span><span style="color:#ce9178">"200_MA"</span><span style="color:#da70d6">]</span><span style="color:#d4d4d4">, </span><span style="color:#d4d4d4">label</span><span style="color:#d4d4d4">=</span><span style="color:#ce9178">"200-Day MA"</span><span style="color:#d4d4d4">, </span><span style="color:#d4d4d4">color</span><span style="color:#d4d4d4">=</span><span style="color:#ce9178">"green"</span><span style="color:#ffd700">)</span></div>
<div class="t m" style="left:354.88px;top:492.44px;font-size:12.83px;line-height:20px;"><span style="color:#d4d4d4">plt</span><span style="color:#d4d4d4">.</span><span style="color:#d4d4d4">legend</span><span style="color:#ffd700">()</span></div>
<div class="t m" style="left:354.88px;top:511.44px;font-size:12.83px;line-height:20px;"><span style="color:#d4d4d4">plt</span><span style="color:#d4d4d4">.</span><span style="color:#d4d4d4">show</span><span style="color:#ffd700">()</span></div>
<div style="left:801.31px;top:436.16px;width:1.76px;height:18.56px;background:#d8d8d8;"></div>
<span class="t" style="left:293.6px;top:534.96px;font-size:10.8px;line-height:20px;letter-spacing:-0.7px;color:#6c6c6c;-webkit-text-stroke-width:0.2px;">[7]</span>
<svg class="i" viewBox="0 0 16 16" style="left:333.44px;top:537.28px;width:14.72px;height:14.72px;"><path d="M2.500 8.500l3.500 3.500 7.500-8" fill="none" stroke="#b8b8b8" stroke-width="1.400"/></svg>
<span class="t" style="left:361.6px;top:534.96px;font-size:11.6px;line-height:20px;letter-spacing:-0.48px;color:#a6a6a6;">0.1s</span>
<span class="t" style="left:2512.8px;top:534.96px;font-size:11.6px;line-height:20px;letter-spacing:0.19px;color:#cccccc;">Python</span>
<svg class="i" viewBox="0 0 16 16" style="left:292.16px;top:567.36px;width:14.72px;height:14.72px;"><circle cx="2.500" cy="8" r="1" fill="#9a9a9a"/><circle cx="8" cy="8" r="1" fill="#9a9a9a"/><circle cx="13.500" cy="8" r="1" fill="#9a9a9a"/></svg>
<figure><svg class="i" id="figure" viewBox="0 0 994.88 509.76" style="left:334.72px;top:564.16px;width:994.88px;height:509.76px;background:#fff"><polyline points="91.04,316.44 91.31,319.04 91.58,314.18 91.84,314.1 92.11,317.16 92.38,313.31 92.65,313.05 92.92,312.19 93.18,313.61 93.45,316.77 93.72,308.91 93.99,311.05 94.25,306.61 94.52,312.96 94.79,315.88 95.06,310.77 95.33,312.69 95.59,310.13 95.86,316.28 96.13,307.57 96.4,312.01 96.67,309.94 96.93,314.95 97.2,313.21 97.47,312.32 97.74,317.62 98.01,314.8 98.27,316.56 98.54,322.83 98.81,318.42 99.08,320.34 99.35,320.73 99.61,320.04 99.88,321.69 100.15,318.53 100.42,319.59 100.68,323.58 100.95,315.87 101.22,321.38 101.49,321.61 101.76,323.15 102.02,320.58 102.29,324.86 102.56,320.92 102.83,318.77 103.1,318.93 103.36,321.03 103.63,320.07 103.9,321.42 104.17,319.96 104.44,323.49 104.7,321.21 104.97,323.38 105.24,322.16 105.51,318.86 105.77,324.07 106.04,322.46 106.31,322.89 106.58,321.21 106.85,324.52 107.11,321.55 107.38,323.73 107.65,323.63 107.92,322.47 108.19,318.66 108.45,322.44 108.72,324.61 108.99,326.4 109.26,328.15 109.53,327.97 109.79,331.39 110.06,331.16 110.33,331.09 110.6,335.42 110.86,333.78 111.13,333.88 111.4,334.27 111.67,333.68 111.94,335.59 112.2,331.98 112.47,332.41 112.74,331.94 113.01,329.95 113.28,329.45 113.54,326.65 113.81,335.68 114.08,333.69 114.35,336.53 114.62,338.33 114.88,338.97 115.15,339.58 115.42,335.13 115.69,338.13 115.96,343.19 116.22,347.41 116.49,342.45 116.76,349.03 117.03,348 117.29,351.78 117.56,353.48 117.83,350.22 118.1,349.58 118.37,352.91 118.63,351.95 118.9,356.95 119.17,358.57 119.44,355.94 119.71,356.9 119.97,355.93 120.24,354.54 120.51,351.52 120.78,348.44 121.05,353.36 121.31,351.87 121.58,354.4 121.85,352.92 122.12,350.11 122.38,349.98 122.65,350.12 122.92,350.9 123.19,348.23 123.46,350.33 123.72,349.54 123.99,346.68 124.26,347.96 124.53,346.91 124.8,345.03 125.06,346.17 125.33,347.44 125.6,349.4 125.87,345.19 126.14,347.86 126.4,345.04 126.67,345.83 126.94,345.03 127.21,341.91 127.47,344.88 127.74,341.83 128.01,344.75 128.28,342.33 128.55,342.18 128.81,352.47 129.08,348.29 129.35,347.57 129.62,348.49 129.89,345.87 130.15,347.04 130.42,347.69 130.69,344.75 130.96,344.09 131.23,343.74 131.49,352.45 131.76,352.41 132.03,350.36 132.3,348.3 132.57,346.06 132.83,351.97 133.1,349.19 133.37,352.08 133.64,349.92 133.9,348.26 134.17,348.52 134.44,351.34 134.71,353.75 134.98,351.53 135.24,354.84 135.51,350.95 135.78,356.86 136.05,357.58 136.32,352.87 136.58,353.04 136.85,351.58 137.12,351.06 137.39,353.62 137.66,350.65 137.92,348.3 138.19,349.12 138.46,347.88 138.73,350.68 138.99,350.5 139.26,345.42 139.53,348.52 139.8,348.38 140.07,348.5 140.33,350.18 140.6,351.23 140.87,350.09 141.14,347.44 141.41,349.8 141.67,348.69 141.94,346.26 142.21,344.67 142.48,349.44 142.75,349.89 143.01,351.78 143.28,348.09 143.55,349.76 143.82,350.12 144.08,349.85 144.35,346.1 144.62,347.05 144.89,346.68 145.16,346.33 145.42,350.59 145.69,347.99 145.96,347.39 146.23,351.3 146.5,350.55 146.76,353.14 147.03,352.73 147.3,353.71 147.57,354.43 147.84,357.94 148.1,358.23 148.37,358.46 148.64,360.13 148.91,356 149.18,360.48 149.44,356.93 149.71,356.63 149.98,360.08 150.25,356.55 150.51,360.8 150.78,356.8 151.05,360.83 151.32,362.11 151.59,361.75 151.85,365 152.12,360.08 152.39,364.61 152.66,363.74 152.93,366.53 153.19,368.02 153.46,362.4 153.73,363.97 154,367.73 154.27,364.7 154.53,369.02 154.8,370.41 155.07,368.56 155.34,367.13 155.6,367.57 155.87,367.73 156.14,371.71 156.41,369.31 156.68,372.5 156.94,373.4 157.21,374.63 157.48,371.8 157.75,372.56 158.02,371.7 158.28,377.17 158.55,376.75 158.82,375.42 159.09,375.63 159.36,376.44 159.62,378.97 159.89,378.07 160.16,379.62 160.43,382.78 160.7,382.78 160.96,380.84 161.23,381.05 161.5,381.19 161.77,377.51 162.03,375.8 162.3,379.59 162.57,376.91 162.84,379.29 163.11,379.01 163.37,375.46 163.64,377.83 163.91,380.71 164.18,378.7 164.45,375.87 164.71,377.78 164.98,374.91 165.25,374.95 165.52,373.78 165.79,375.72 166.05,376.4 166.32,374.87 166.59,372.81 166.86,369.96 167.12,372.31 167.39,371.01 167.66,371.29 167.93,367.78 168.2,367.31 168.46,366.99 168.73,367.64 169,363.82 169.27,364.98 169.54,366.84 169.8,363.37 170.07,360.28 170.34,361.78 170.61,361.97 170.88,365.74 171.14,362.3 171.41,361.25 171.68,359.02 171.95,361.29 172.21,363.58 172.48,358.59 172.75,360.6 173.02,358.24 173.29,359.2 173.55,358.95 173.82,361.89 174.09,358.11 174.36,359.81 174.63,364.18 174.89,365.24 175.16,362.68 175.43,365.68 175.7,366.44 175.97,367.18 176.23,369.63 176.5,371 176.77,369.18 177.04,367.48 177.31,374.21 177.57,370.33 177.84,371.55 178.11,375.74 178.38,373.98 178.64,371.99 178.91,372.97 179.18,377.08 179.45,374.84 179.72,375.81 179.98,376.42 180.25,373.88 180.52,376.05 180.79,377.37 181.06,374.13 181.32,373.91 181.59,371.62 181.86,374.76 182.13,375.19 182.4,369.74 182.66,370.57 182.93,372.67 183.2,366.1 183.47,371.54 183.73,369.32 184,368.1 184.27,368.18 184.54,364.95 184.81,367.73 185.07,363.81 185.34,363.1 185.61,362.92 185.88,363.38 186.15,361.25 186.41,361.87 186.68,355.17 186.95,354.63 187.22,354.11 187.49,358.26 187.75,358.35 188.02,358.29 188.29,358.84 188.56,353.31 188.82,362.83 189.09,360.79 189.36,358.43 189.63,357.99 189.9,357.59 190.16,356.81 190.43,359.39 190.7,359.36 190.97,357.14 191.24,356.31 191.5,356.89 191.77,355.81 192.04,357.75 192.31,357.79 192.58,354.33 192.84,354.05 193.11,353.62 193.38,354.18 193.65,353.08 193.92,354.54 194.18,352.35 194.45,353.48 194.72,352.55 194.99,354.54 195.25,353.94 195.52,352.07 195.79,351.5 196.06,355.72 196.33,351.18 196.59,356.77 196.86,357.5 197.13,358.93 197.4,356.57 197.67,362.38 197.93,359.62 198.2,360.87 198.47,361.27 198.74,362.87 199.01,364.48 199.27,360.63 199.54,361.27 199.81,363.67 200.08,367.3 200.34,363.33 200.61,363.68 200.88,365.81 201.15,366.63 201.42,368.89 201.68,369.31 201.95,368.43 202.22,369.37 202.49,371.25 202.76,371.63 203.02,373.09 203.29,371.76 203.56,373.21 203.83,372.41 204.1,371.55 204.36,370.33 204.63,370.92 204.9,371.48 205.17,369.8 205.44,370.31 205.7,374.24 205.97,371.84 206.24,368.33 206.51,370.48 206.77,375.41 207.04,372.14 207.31,375.85 207.58,374.99 207.85,374.23 208.11,375.36 208.38,379.18 208.65,373.91 208.92,378.34 209.19,377.93 209.45,375.82 209.72,374.25 209.99,378.69 210.26,380.13 210.53,376.11 210.79,377.71 211.06,378.3 211.33,383.53 211.6,383.1 211.86,378.23 212.13,378.82 212.4,380.06 212.67,380.66 212.94,376.4 213.2,378.86 213.47,375.91 213.74,380.43 214.01,380.9 214.28,382.2 214.54,382.56 214.81,382.92 215.08,381.41 215.35,381.23 215.62,380.3 215.88,380.29 216.15,382.97 216.42,383.57 216.69,380.76 216.95,384.4 217.22,381.62 217.49,378.43 217.76,377.16 218.03,382.75 218.29,376.81 218.56,379.1 218.83,376.07 219.1,379.59 219.37,378.99 219.63,378.65 219.9,379.82 220.17,377.97 220.44,376.83 220.71,377.72 220.97,379.52 221.24,376.63 221.51,378.59 221.78,378.3 222.05,380.7 222.31,377.59 222.58,378.51 222.85,380.91 223.12,378.02 223.38,370.31 223.65,375.54 223.92,377.84 224.19,374.21 224.46,378.69 224.72,377.56 224.99,376.68 225.26,377.45 225.53,377.93 225.8,378.69 226.06,380.56 226.33,378.86 226.6,380.94 226.87,383.34 227.14,381.3 227.4,382.65 227.67,387 227.94,382.88 228.21,384.22 228.47,382.69 228.74,387.28 229.01,382.36 229.28,388.09 229.55,384.9 229.81,383.79 230.08,386.45 230.35,387.31 230.62,388.58 230.89,392.22 231.15,387.58 231.42,391.82 231.69,394.16 231.96,389.25 232.23,393.61 232.49,393.08 232.76,393.87 233.03,394.78 233.3,392.16 233.56,390.9 233.83,392.83 234.1,393.53 234.37,393.59 234.64,393.1 234.9,393.01 235.17,394.38 235.44,392.65 235.71,392.99 235.98,394.51 236.24,395.64 236.51,394.58 236.78,395.9 237.05,398.48 237.32,393.1 237.58,394.27 237.85,393.93 238.12,392.43 238.39,391.63 238.66,393.87 238.92,399.63 239.19,337.65 239.46,232 239.73,147.72 239.99,154.27 240.26,163.81 240.53,166.58 240.8,175.31 241.07,175.26 241.33,178.36 241.6,194.51 241.87,193.5 242.14,200.3 242.41,202.81 242.67,212.31 242.94,218.72 243.21,209.19 243.48,221.73 243.75,219.08 244.01,231.36 244.28,222.05 244.55,232.16 244.82,233.77 245.08,245.28 245.35,243.16 245.62,235.3 245.89,245.73 246.16,245.05 246.42,255.19 246.69,258.09 246.96,255.8 247.23,265.8 247.5,260.93 247.76,264.94 248.03,269.47 248.3,269.31 248.57,270.93 248.84,268.26 249.1,279.5 249.37,271.42 249.64,275.18 249.91,276.27 250.17,276.38 250.44,279.04 250.71,281.71 250.98,284.78 251.25,283.76 251.51,278.99 251.78,280.63 252.05,287.33 252.32,289.64 252.59,290.16 252.85,292.3 253.12,289.55 253.39,292.5 253.66,290.88 253.93,291.97 254.19,290.31 254.46,301.3 254.73,302.06 255,299.45 255.27,296.36 255.53,293 255.8,288.88 256.07,286.02 256.34,283.55 256.6,279.99 256.87,277.34 257.14,278.11 257.41,271.15 257.68,265.45 257.94,269.93 258.21,265.99 258.48,263.73 258.75,260.59 259.02,255.5 259.28,266.55 259.55,263.36 259.82,269.61 260.09,267.33 260.36,271.82 260.62,272.26 260.89,275.87 261.16,282.94 261.43,282.33 261.69,286.18 261.96,278.55 262.23,284.32 262.5,285.39 262.77,288.75 263.03,285.92 263.3,291.86 263.57,290.64 263.84,297.97 264.11,301.72 264.37,292.68 264.64,293.75 264.91,294.9 265.18,300.41 265.45,298.49 265.71,304.43 265.98,301.64 266.25,307.53 266.52,304.11 266.79,306.14 267.05,304.2 267.32,305.67 267.59,311.84 267.86,310.94 268.12,309.41 268.39,317.11 268.66,314.49 268.93,319.26 269.2,324.16 269.46,314.17 269.73,319.6 270,319.24 270.27,318.88 270.54,322.85 270.8,324.2 271.07,319.66 271.34,322.81 271.61,328.33 271.88,325.12 272.14,329.96 272.41,324.65 272.68,326.93 272.95,328.63 273.21,328.9 273.48,327.57 273.75,336.48 274.02,331.38 274.29,334.54 274.55,332.27 274.82,334.28 275.09,338.17 275.36,338.94 275.63,340.7 275.89,340.55 276.16,339.44 276.43,341.46 276.7,343.71 276.97,338.81 277.23,343.74 277.5,340.11 277.77,337.39 278.04,339.24 278.3,348.95 278.57,343.07 278.84,342.35 279.11,344.06 279.38,334.68 279.64,336.34 279.91,333.66 280.18,335.63 280.45,337.56 280.72,336.94 280.98,338.1 281.25,337.61 281.52,332.66 281.79,338.09 282.06,337.4 282.32,334.56 282.59,333.59 282.86,331.36 283.13,331.64 283.4,329.93 283.66,335.18 283.93,336.01 284.2,335.78 284.47,337.29 284.73,335.96 285,332.82 285.27,334.2 285.54,335.01 285.81,336.42 286.07,337.25 286.34,333.88 286.61,336.37 286.88,337.5 287.15,333.42 287.41,340.06 287.68,339.93 287.95,343.86 288.22,343.36 288.49,345.77 288.75,346.53 289.02,345.68 289.29,348.66 289.56,349.63 289.82,352.35 290.09,347.48 290.36,356.01 290.63,354.01 290.9,358.98 291.16,353.18 291.43,354.38 291.7,361.01 291.97,355.85 292.24,357.41 292.5,357.33 292.77,359.65 293.04,358.08 293.31,358.72 293.58,360.98 293.84,365.24 294.11,362.42 294.38,364.76 294.65,369.08 294.91,369.15 295.18,366.08 295.45,368.91 295.72,370.85 295.99,370.73 296.25,371.04 296.52,370.34 296.79,370.37 297.06,366.73 297.33,365.62 297.59,365.82 297.86,361.02 298.13,362.09 298.4,357.83 298.67,356.38 298.93,353.12 299.2,351.41 299.47,351.11 299.74,357.28 300.01,347.06 300.27,345.42 300.54,342.12 300.81,343.27 301.08,339.4 301.34,335.77 301.61,333.22 301.88,331.25 302.15,334.11 302.42,328.2 302.68,329.13 302.95,328.96 303.22,321.62 303.49,324.18 303.76,318.11 304.02,322.58 304.29,319.07 304.56,316.05 304.83,320.08 305.1,324.04 305.36,325.36 305.63,322.82 305.9,326.74 306.17,322.38 306.43,321.63 306.7,322.98 306.97,321.31 307.24,321.48 307.51,322.39 307.77,328.81 308.04,324.67 308.31,327.07 308.58,328.67 308.85,327.72 309.11,328.6 309.38,324.56 309.65,327.59 309.92,330.94 310.19,334.66 310.45,335.64 310.72,339.37 310.99,337.8 311.26,335.54 311.52,337.01 311.79,340.16 312.06,337.18 312.33,339.26 312.6,337.49 312.86,343.97 313.13,342.81 313.4,343.22 313.67,345.36 313.94,349.62 314.2,348.35 314.47,349.87 314.74,350.41 315.01,350.37 315.28,351.97 315.54,348.58 315.81,352.75 316.08,352.22 316.35,352.18 316.62,348.8 316.88,348.88 317.15,348.85 317.42,350.09 317.69,351.43 317.95,352.7 318.22,352.64 318.49,350.23 318.76,349.8 319.03,356.24 319.29,357.57 319.56,359.87 319.83,359.75 320.1,359.86 320.37,361.9 320.63,360.64 320.9,363.83 321.17,362.7 321.44,359.88 321.71,364.46 321.97,364.02 322.24,361.85 322.51,363.1 322.78,361.09 323.04,360.13 323.31,358.62 323.58,362.76 323.85,363.09 324.12,356.92 324.38,358.99 324.65,362.23 324.92,361.59 325.19,359.58 325.46,358.82 325.72,362.45 325.99,362.64 326.26,363.27 326.53,361.05 326.8,361.89 327.06,360.16 327.33,357.59 327.6,361.35 327.87,359.79 328.14,356.61 328.4,355.75 328.67,356.79 328.94,358.75 329.21,361.94 329.47,357.01 329.74,359.48 330.01,360.32 330.28,354.64 330.55,357.05 330.81,356.15 331.08,360.02 331.35,354.5 331.62,357.87 331.89,358.55 332.15,356.2 332.42,362.93 332.69,359.05 332.96,357.26 333.23,361.05 333.49,361.62 333.76,358.52 334.03,361.66 334.3,361.03 334.56,360.09 334.83,362.04 335.1,366.27 335.37,363.58 335.64,365.25 335.9,362.94 336.17,363.31 336.44,368.32 336.71,366.27 336.98,366.96 337.24,363.57 337.51,365.93 337.78,361.58 338.05,365.68 338.32,362.65 338.58,363.85 338.85,362.37 339.12,365.11 339.39,366.29 339.65,365.76 339.92,367.57 340.19,365.31 340.46,365.57 340.73,367.27 340.99,366.15 341.26,364 341.53,363.6 341.8,364.35 342.07,364.68 342.33,363.62 342.6,364.65 342.87,362.77 343.14,365.21 343.41,367.1 343.67,367.28 343.94,366.08 344.21,365.84 344.48,366.95 344.75,366.73 345.01,369.16 345.28,369.07 345.55,368.59 345.82,368.91 346.08,370.31 346.35,372.83 346.62,370.29 346.89,370.03 347.16,373.92 347.42,367.24 347.69,370.84 347.96,369.76 348.23,369.63 348.5,371.29 348.76,371.22 349.03,371.82 349.3,372.08 349.57,372.32 349.84,372.32 350.1,373.38 350.37,371.2 350.64,371.49 350.91,373.13 351.17,376 351.44,372.11 351.71,374.55 351.98,372.29 352.25,370.5 352.51,376.18 352.78,374.97 353.05,372.77 353.32,375.25 353.59,375.76 353.85,375.31 354.12,376.4 354.39,374.78 354.66,372.33 354.93,377.72 355.19,373.79 355.46,374.57 355.73,373.49 356,373.21 356.26,376.02 356.53,376.98 356.8,374.81 357.07,377.6 357.34,376.84 357.6,376.64 357.87,381.59 358.14,379.26 358.41,378.65 358.68,379.58 358.94,380.27 359.21,379.61 359.48,379.64 359.75,380.83 360.02,381.55 360.28,382.86 360.55,383.56 360.82,386.34 361.09,384.83 361.36,386.65 361.62,385.35 361.89,386.38 362.16,385.92 362.43,386.1 362.69,387.54 362.96,388.87 363.23,386.47 363.5,389.92 363.77,390.49 364.03,391.7 364.3,392.61 364.57,392.04 364.84,394.72 365.11,393.49 365.37,394.75 365.64,391.8 365.91,393.9 366.18,393.52 366.45,392.08 366.71,394.75 366.98,393.07 367.25,400.53 367.52,396.11 367.78,394.17 368.05,394.61 368.32,396.6 368.59,393.49 368.86,395.37 369.12,392.66 369.39,393.29 369.66,396.67 369.93,395.38 370.2,397.44 370.46,397.97 370.73,398.27 371,400.83 371.27,395.35 371.54,397.72 371.8,396.7 372.07,394.01 372.34,395.08 372.61,397.72 372.88,398.07 373.14,395.47 373.41,397.25 373.68,394.4 373.95,396.12 374.21,399.03 374.48,398.91 374.75,396.26 375.02,397.49 375.29,397.76 375.55,398.53 375.82,399.88 376.09,399.04 376.36,400.55 376.63,399.02 376.89,399.96 377.16,402.59 377.43,399.63 377.7,399.85 377.97,402.41 378.23,399.89 378.5,403.23 378.77,401.66 379.04,401.95 379.3,402.69 379.57,401.96 379.84,403.09 380.11,402.67 380.38,405.8 380.64,404.64 380.91,400.8 381.18,400.23 381.45,401.96 381.72,402.35 381.98,403.03 382.25,403.55 382.52,403.69 382.79,401.24 383.06,403 383.32,403.92 383.59,403.33 383.86,406.72 384.13,404.93 384.39,404.83 384.66,405.07 384.93,406.33 385.2,404.9 385.47,404.21 385.73,406.19 386,405.67 386.27,409.42 386.54,405.12 386.81,407.72 387.07,403.04 387.34,403.17 387.61,405.6 387.88,402.71 388.15,400.71 388.41,403.43 388.68,401.78 388.95,404.24 389.22,399.71 389.49,400.87 389.75,400.61 390.02,400.33 390.29,398.96 390.56,402.49 390.82,401.37 391.09,399.72 391.36,400.84 391.63,400.04 391.9,401.49 392.16,399.99 392.43,399.45 392.7,398.02 392.97,398.94 393.24,399.59 393.5,397.65 393.77,397.97 394.04,398.79 394.31,398.96 394.58,394.67 394.84,399.15 395.11,401.55 395.38,399.01 395.65,398.5 395.91,397.78 396.18,395.8 396.45,396.03 396.72,395.86 396.99,397.73 397.25,396.82 397.52,393.86 397.79,396.3 398.06,395.74 398.33,394.19 398.59,395.03 398.86,393.5 399.13,391.57 399.4,393.01 399.67,391.56 399.93,392.01 400.2,390.83 400.47,390.56 400.74,392.87 401,391.7 401.27,387.82 401.54,389.05 401.81,388.77 402.08,389.19 402.34,389.73 402.61,392.05 402.88,391.62 403.15,391.67 403.42,390.04 403.68,389.7 403.95,392.73 404.22,393.73 404.49,392.33 404.76,392.33 405.02,390.29 405.29,391.25 405.56,391.98 405.83,392.36 406.1,391.99 406.36,391.24 406.63,391.59 406.9,395.23 407.17,391.75 407.43,395.84 407.7,396.12 407.97,391.5 408.24,391.28 408.51,394.94 408.77,391.5 409.04,389.68 409.31,388.88 409.58,387.57 409.85,390.63 410.11,388.82 410.38,388.13 410.65,386.2 410.92,387.85 411.19,384.77 411.45,387.13 411.72,384.24 411.99,387.18 412.26,386.65 412.52,384.88 412.79,387.76 413.06,388.43 413.33,386.28 413.6,384.48 413.86,384.6 414.13,382.43 414.4,384.03 414.67,386.47 414.94,383.14 415.2,384.78 415.47,379.72 415.74,380.2 416.01,383.56 416.28,380.89 416.54,381.25 416.81,382.66 417.08,383.36 417.35,381.24 417.61,380.13 417.88,381.28 418.15,379.63 418.42,380.22 418.69,381.24 418.95,379.73 419.22,380.58 419.49,379.12 419.76,380.2 420.03,381.59 420.29,383.26 420.56,381.94 420.83,382.19 421.1,380.82 421.37,379.04 421.63,378.86 421.9,384.67 422.17,378.43 422.44,380.05 422.71,382.85 422.97,383.98 423.24,385.83 423.51,384.09 423.78,384.14 424.04,380.59 424.31,384.35 424.58,384.27 424.85,383.46 425.12,382.23 425.38,382.41 425.65,384.01 425.92,382.33 426.19,383.42 426.46,384.54 426.72,386.53 426.99,387.94 427.26,386.04 427.53,387.26 427.8,386 428.06,386.65 428.33,382.64 428.6,383.37 428.87,382.7 429.13,385.41 429.4,385.25 429.67,388.72 429.94,385.61 430.21,388.4 430.47,392.65 430.74,389.46 431.01,390.88 431.28,390.63 431.55,392.71 431.81,393.17 432.08,393.66 432.35,392.42 432.62,392.99 432.89,394.62 433.15,389.31 433.42,391.26 433.69,391.39 433.96,394.15 434.23,392.37 434.49,394.72 434.76,392.17 435.03,395.26 435.3,392.8 435.56,395.48 435.83,395.6 436.1,394.4 436.37,394.02 436.64,394.82 436.9,395.45 437.17,398.67 437.44,396.04 437.71,396.8 437.98,395.97 438.24,394.73 438.51,396.54 438.78,396.66 439.05,396.51 439.32,398.22 439.58,399.51 439.85,398.4 440.12,396.91 440.39,396.91 440.65,400.46 440.92,401.86 441.19,398.57 441.46,400.49 441.73,399.98 441.99,401.28 442.26,399.78 442.53,402.18 442.8,403.67 443.07,402.82 443.33,401.74 443.6,401.77 443.87,399.1 444.14,401.39 444.41,398.66 444.67,401.85 444.94,398.83 445.21,400.85 445.48,401.71 445.74,404.54 446.01,403.14 446.28,404.61 446.55,400.99 446.82,403.17 447.08,404.95 447.35,405.71 447.62,403.39 447.89,401.19 448.16,406.35 448.42,401.73 448.69,403.2 448.96,406.35 449.23,405.48 449.5,403.3 449.76,402.83 450.03,405.72 450.3,376.55 450.57,227.47 450.84,79.01 451.1,72.15 451.37,63.59 451.64,76.82 451.91,83.77 452.17,83.77 452.44,85.63 452.71,97.88 452.98,96.43 453.25,107.43 453.51,115.09 453.78,121.63 454.05,124.42 454.32,109.45 454.59,108.66 454.85,114.35 455.12,125.1 455.39,113.71 455.66,122.71 455.93,127.84 456.19,129.05 456.46,133.35 456.73,141.36 457,145.9 457.26,146.63 457.53,142.76 457.8,133.14 458.07,144.97 458.34,145.01 458.6,151.07 458.87,149.71 459.14,153.62 459.41,162.27 459.68,150.64 459.94,152.81 460.21,155.97 460.48,149.23 460.75,152.09 461.02,149.82 461.28,149.63 461.55,153.06 461.82,145.4 462.09,139.97 462.35,143.69 462.62,138.73 462.89,135.01 463.16,136.02 463.43,132.98 463.69,133.21 463.96,130.78 464.23,120.62 464.5,125.53 464.77,115.34 465.03,107.69 465.3,115.7 465.57,111.31 465.84,103.69 466.11,112.82 466.37,118.33 466.64,120.71 466.91,122.07 467.18,115.55 467.45,109.34 467.71,126.57 467.98,125.84 468.25,124.82 468.52,125.29 468.78,117.05 469.05,123.42 469.32,127.48 469.59,130.88 469.86,126.92 470.12,130.19 470.39,137.89 470.66,130.15 470.93,124.64 471.2,136.03 471.46,132.58 471.73,138.65 472,140.91 472.27,144.13 472.54,144.36 472.8,151.91 473.07,155.01 473.34,154.77 473.61,155.04 473.87,155.89 474.14,158.46 474.41,159.52 474.68,168.3 474.95,160.14 475.21,165.72 475.48,172.05 475.75,169.8 476.02,175.13 476.29,176.26 476.55,172.93 476.82,172.71 477.09,172.57 477.36,179.96 477.63,171.55 477.89,179.4 478.16,177.45 478.43,181.74 478.7,178.98 478.96,184.3 479.23,183.17 479.5,192.46 479.77,194.15 480.04,198.39 480.3,190.02 480.57,201.37 480.84,202.61 481.11,201.27 481.38,195.43 481.64,203.05 481.91,202.3 482.18,203.44 482.45,208.49 482.72,204.86 482.98,204.37 483.25,206.15 483.52,210.74 483.79,212.54 484.06,214.18 484.32,210.48 484.59,216 484.86,212.59 485.13,210.66 485.39,214.01 485.66,223.25 485.93,225.92 486.2,218.66 486.47,210.43 486.73,212.39 487,212.38 487.27,208.86 487.54,203.79 487.81,206.28 488.07,198.77 488.34,192.4 488.61,193.75 488.88,198.36 489.15,190.01 489.41,196.85 489.68,198.75 489.95,191.04 490.22,187.21 490.48,193.74 490.75,192.56 491.02,189.62 491.29,181.45 491.56,185.14 491.82,187.16 492.09,185.75 492.36,188.18 492.63,191.77 492.9,181.63 493.16,185.2 493.43,184.13 493.7,175.6 493.97,187.3 494.24,180.92 494.5,167.72 494.77,170.47 495.04,163.09 495.31,167.14 495.58,152.92 495.84,152.65 496.11,147.99 496.38,148.55 496.65,151.73 496.91,138.55 497.18,144.35 497.45,139.11 497.72,139.81 497.99,140.12 498.25,133.9 498.52,129.1 498.79,133.11 499.06,132.62 499.33,135.4 499.59,133.16 499.86,126.85 500.13,120.63 500.4,120.68 500.67,112.81 500.93,119.34 501.2,118.95 501.47,98.33 501.74,112.4 502,102.57 502.27,102.18 502.54,101.98 502.81,90.66 503.08,86.66 503.34,95.2 503.61,85.17 503.88,78.9 504.15,81.2 504.42,62.09 504.68,56.48 504.95,50.49 505.22,48.87 505.49,58.26 505.76,35.7 506.02,40.91 506.29,35.97 506.56,31.42 506.83,45.85 507.09,39.73 507.36,55.95 507.63,51.19 507.9,41.3 508.17,38.29 508.43,41.67 508.7,37.7 508.97,47.95 509.24,46.15 509.51,41.87 509.77,58.48 510.04,54.77 510.31,54.36 510.58,53.9 510.85,46.41 511.11,67.84 511.38,64.3 511.65,53.7 511.92,66.76 512.19,64.37 512.45,72.67 512.72,61.02 512.99,64.89 513.26,65.49 513.52,69.15 513.79,69.32 514.06,73.6 514.33,91.46 514.6,93.37 514.86,87.33 515.13,98.09 515.4,92.48 515.67,93.63 515.94,99.44 516.2,104.17 516.47,104.82 516.74,112.79 517.01,101.09 517.28,114.75 517.54,110.8 517.81,113.26 518.08,122.46 518.35,107.13 518.61,119.5 518.88,120.58 519.15,124.12 519.42,123.75 519.69,131.22 519.95,118.81 520.22,123.52 520.49,122.85 520.76,109.8 521.03,112.57 521.29,96.84 521.56,101.21 521.83,102.34 522.1,99.26 522.37,87.28 522.63,78.06 522.9,79.74 523.17,63.07 523.44,79.39 523.7,71.82 523.97,77.93 524.24,67.35 524.51,93.53 524.78,101.7 525.04,101.77 525.31,105.96 525.58,104.46 525.85,118.94 526.12,120.39 526.38,122.23 526.65,116.85 526.92,133.67 527.19,140.3 527.46,134.85 527.72,156.3 527.99,147.79 528.26,154.38 528.53,160.75 528.8,167.3 529.06,159.3 529.33,172.33 529.6,177.75 529.87,180.35 530.13,182 530.4,185.15 530.67,185.98 530.94,184.37 531.21,187.9 531.47,189.07 531.74,190.25 532.01,197.23 532.28,205.62 532.55,199.55 532.81,196.57 533.08,212.46 533.35,209.27 533.62,215 533.89,221.01 534.15,218.76 534.42,215.63 534.69,214.63 534.96,223.89 535.22,217.65 535.49,227.67 535.76,227.97 536.03,231.35 536.3,219.61 536.56,226.5 536.83,228.33 537.1,234.65 537.37,225.94 537.64,227.57 537.9,225.18 538.17,215.34 538.44,210.74 538.71,216.2 538.98,215.78 539.24,212.44 539.51,212.46 539.78,214.01 540.05,216.81 540.32,208.6 540.58,209.1 540.85,212.11 541.12,212.21 541.39,211.37 541.65,218.36 541.92,221.94 542.19,223.25 542.46,220.02 542.73,225.95 542.99,226.84 543.26,233.64 543.53,231.21 543.8,242.06 544.07,240.01 544.33,238.38 544.6,239.51 544.87,239.32 545.14,236.05 545.41,241.21 545.67,239.79 545.94,248.74 546.21,244.46 546.48,241.2 546.74,244.91 547.01,244.14 547.28,237.52 547.55,237.52 547.82,237.25 548.08,249.69 548.35,245.85 548.62,241.79 548.89,251.28 549.16,252.89 549.42,256.3 549.69,259.38 549.96,261.27 550.23,261.67 550.5,257.22 550.76,268.34 551.03,266.79 551.3,265.63 551.57,264.28 551.83,258.79 552.1,261.37 552.37,260.26 552.64,258.8 552.91,256.85 553.17,259.44 553.44,255.64 553.71,254.69 553.98,252.59 554.25,259.21 554.51,254.49 554.78,253.62 555.05,250.51 555.32,252.62 555.59,253.75 555.85,250.05 556.12,247.94 556.39,247.12 556.66,246.24 556.93,250.85 557.19,250.57 557.46,251.13 557.73,246.58 558,248.29 558.26,244.65 558.53,242.3 558.8,247.26 559.07,247.23 559.34,243.69 559.6,241.02 559.87,245.91 560.14,248.08 560.41,236.12 560.68,241.14 560.94,238.15 561.21,234.78 561.48,243.79 561.75,248.49 562.02,246.31 562.28,245.91 562.55,250.6 562.82,242.81 563.09,253.17 563.35,253.1 563.62,256.55 563.89,254.42 564.16,244.01 564.43,251.43 564.69,256.18 564.96,258.98 565.23,254.85 565.5,264.51 565.77,258.22 566.03,257.23 566.3,256.34 566.57,258.82 566.84,258.99 567.11,265.73 567.37,264.34 567.64,266.12 567.91,266.3 568.18,262.97 568.44,260.96 568.71,267.6 568.98,266.49 569.25,268.94 569.52,271.33 569.78,269.28 570.05,267.27 570.32,272.84 570.59,270.66 570.86,276.17 571.12,276.21 571.39,277.96 571.66,274.74 571.93,280.69 572.2,282.3 572.46,280.69 572.73,280.87 573,277.92 573.27,278.67 573.54,284.97 573.8,282.67 574.07,286.54 574.34,288.92 574.61,292.89 574.87,287.44 575.14,290.25 575.41,295 575.68,303.27 575.95,296.52 576.21,297.15 576.48,299.2 576.75,301.24 577.02,297.87 577.29,298.18 577.55,300.94 577.82,301.6 578.09,301.91 578.36,306.24 578.63,307.67 578.89,311.93 579.16,306.57 579.43,312.72 579.7,310.33 579.96,307.57 580.23,306.12 580.5,305.31 580.77,308.25 581.04,302.51 581.3,302.49 581.57,307.49 581.84,301.41 582.11,304.01 582.38,308.4 582.64,304.01 582.91,302.28 583.18,304.75 583.45,306.68 583.72,305.72 583.98,307.64 584.25,299.93 584.52,300.04 584.79,296.85 585.05,296.6 585.32,301.36 585.59,301.47 585.86,300.7 586.13,299.07 586.39,302.5 586.66,308.77 586.93,303.38 587.2,305.22 587.47,308.29 587.73,306.83 588,303.16 588.27,308.37 588.54,309.28 588.81,307.24 589.07,310.83 589.34,312.67 589.61,312.53 589.88,316.23 590.15,313.58 590.41,312.55 590.68,317.28 590.95,318.62 591.22,324.38 591.48,320.72 591.75,326.48 592.02,323.7 592.29,328.55 592.56,325.88 592.82,328.55 593.09,324.52 593.36,327.06 593.63,326.28 593.9,326.38 594.16,327.84 594.43,329.61 594.7,334.47 594.97,330.03 595.24,329.78 595.5,330.49 595.77,333.3 596.04,334.29 596.31,335.93 596.57,339.96 596.84,338.15 597.11,337.6 597.38,345.17 597.65,339.85 597.91,344.2 598.18,342.75 598.45,343.99 598.72,341.01 598.99,337.1 599.25,340.46 599.52,338.71 599.79,339.27 600.06,337.66 600.33,339.88 600.59,340.48 600.86,340.61 601.13,335.25 601.4,340.24 601.67,337.08 601.93,341.7 602.2,338.58 602.47,336.52 602.74,342.04 603,341.65 603.27,345.55 603.54,343.23 603.81,340.27 604.08,336.84 604.34,339.17 604.61,340.03 604.88,341.22 605.15,337.26 605.42,338.35 605.68,344.53 605.95,343.42 606.22,343.31 606.49,342.46 606.76,343.57 607.02,343.95 607.29,341.97 607.56,343.59 607.83,345.37 608.09,343.15 608.36,353.7 608.63,352.17 608.9,349.56 609.17,354.86 609.43,352.13 609.7,350.51 609.97,352.77 610.24,353 610.51,355.04 610.77,351.05 611.04,357.95 611.31,353.85 611.58,359.22 611.85,357.78 612.11,360.72 612.38,359.06 612.65,358.34 612.92,359.91 613.18,362.48 613.45,364.41 613.72,366.61 613.99,365.78 614.26,364.67 614.52,364.44 614.79,369.04 615.06,368.46 615.33,370.79 615.6,368.66 615.86,370.61 616.13,374.5 616.4,374.14 616.67,377.12 616.94,376.59 617.2,377.47 617.47,373.26 617.74,379.11 618.01,376.02 618.28,378.84 618.54,375.21 618.81,376.84 619.08,379.88 619.35,375.75 619.61,378.4 619.88,379.87 620.15,376.54 620.42,377.38 620.69,383.58 620.95,383.47 621.22,383.38 621.49,385.05 621.76,383.76 622.03,384.97 622.29,382.81 622.56,384.96 622.83,384.48 623.1,387.7 623.37,386.19 623.63,387.23 623.9,389.07 624.17,390.27 624.44,388.91 624.7,391.31 624.97,393.97 625.24,391.97 625.51,392.91 625.78,390.75 626.04,394.57 626.31,399.59 626.58,390.94 626.85,392.92 627.12,398.2 627.38,394.26 627.65,397.12 627.92,397.73 628.19,400.01 628.46,401.6 628.72,397.2 628.99,399.49 629.26,401.25 629.53,402.27 629.79,406.89 630.06,401.53 630.33,407.33 630.6,403.53 630.87,404.69 631.13,409.13 631.4,406.98 631.67,405.62 631.94,407.14 632.21,404.78 632.47,406.3 632.74,406.61 633.01,404.71 633.28,404.78 633.55,405.83 633.81,403.22 634.08,404.88 634.35,406.51 634.62,403.27 634.89,404.9 635.15,405.99 635.42,404.58 635.69,404.28 635.96,404.23 636.22,401.76 636.49,403.55 636.76,404.39 637.03,402.94 637.3,401.05 637.56,401.19 637.83,402.19 638.1,403.72 638.37,400.81 638.64,399.08 638.9,404.19 639.17,401.55 639.44,399.17 639.71,399.06 639.98,397.15 640.24,395.36 640.51,388.62 640.78,388.7 641.05,389.63 641.31,386.72 641.58,384.71 641.85,378.72 642.12,379.41 642.39,376.34 642.65,375.88 642.92,373.72 643.19,372.39 643.46,369.16 643.73,369.26 643.99,365.56 644.26,368.07 644.53,365.94 644.8,365.1 645.07,359.97 645.33,358.89 645.6,359.71 645.87,363.33 646.14,356.89 646.4,356.6 646.67,356.34 646.94,361.45 647.21,360.02 647.48,357.93 647.74,356.44 648.01,359.01 648.28,356.6 648.55,360.2 648.82,355.95 649.08,352.79 649.35,353.07 649.62,354.74 649.89,349.76 650.16,355.83 650.42,350.69 650.69,351.14 650.96,352.82 651.23,350.76 651.5,349.75 651.76,345.08 652.03,350.45 652.3,352.07 652.57,347.9 652.83,349.04 653.1,349.43 653.37,346.65 653.64,353.91 653.91,351.35 654.17,354.78 654.44,351.28 654.71,354.27 654.98,360.03 655.25,358.21 655.51,357.69 655.78,358.31 656.05,361 656.32,365.17 656.59,364.21 656.85,365.83 657.12,368.4 657.39,368.4 657.66,368.47 657.92,369.62 658.19,371.14 658.46,375.18 658.73,375.19 659,372.17 659.26,370.98 659.53,371.73 659.8,373.66 660.07,373.91 660.34,373.8 660.6,376.41 660.87,378.99 661.14,379.29 661.41,381.2 661.68,379.52 661.94,381.3 662.21,382.71 662.48,382.87 662.75,385.81 663.02,388.82 663.28,385.6 663.55,382.71 663.82,383.82 664.09,380.69 664.35,378.35 664.62,373.74 664.89,371.19 665.16,376.28 665.43,366.67 665.69,364.35 665.96,365.87 666.23,359.06 666.5,357.81 666.77,352.11 667.03,353.3 667.3,351.95 667.57,349.11 667.84,344.64 668.11,347.73 668.37,342.7 668.64,340.31 668.91,344.95 669.18,343.77 669.44,348.53 669.71,343.96 669.98,345.9 670.25,349.32 670.52,343.56 670.78,346.6 671.05,348.89 671.32,347.41 671.59,350.46 671.86,348.1 672.12,349.46 672.39,348.08 672.66,346.84 672.93,346.26 673.2,351.16 673.46,349.12 673.73,354.02 674,354.4 674.27,358.49 674.53,359.53 674.8,359.08 675.07,360.48 675.34,361.16 675.61,364.64 675.87,366.31 676.14,365.7 676.41,367.85 676.68,366.18 676.95,371.01 677.21,369.22 677.48,371.49 677.75,372.23 678.02,371.15 678.29,373.9 678.55,375.92 678.82,376.79 679.09,379.31 679.36,385.07 679.63,384.29 679.89,380.11 680.16,378.86 680.43,378.97 680.7,383.07 680.96,382.51 681.23,382.97 681.5,380.82 681.77,381.39 682.04,382.56 682.3,383.81 682.57,387.92 682.84,388.43 683.11,384.4 683.38,385.5 683.64,385.49 683.91,389.09 684.18,386.16 684.45,386.09 684.72,385.31 684.98,385.64 685.25,386.65 685.52,389.32 685.79,392.81 686.05,389.66 686.32,390.66 686.59,389.65 686.86,391.78 687.13,386.28 687.39,392.05 687.66,390.14 687.93,392.7 688.2,396.67 688.47,397.68 688.73,395.99 689,395.58 689.27,396.59 689.54,398.6 689.81,397.46 690.07,401.03 690.34,399.23 690.61,400.78 690.88,398.54 691.14,399.75 691.41,401.57 691.68,402.02 691.95,402.79 692.22,401.96 692.48,403.01 692.75,403.16 693.02,406.17 693.29,405.42 693.56,405.21 693.82,405.13 694.09,406.71 694.36,403.55 694.63,406.34 694.9,407.01 695.16,404.72 695.43,406.74 695.7,406.41 695.97,405.88 696.24,407.34 696.5,408.26 696.77,409.93 697.04,405.88 697.31,407.61 697.57,411.22 697.84,407.29 698.11,406.27 698.38,407 698.65,409.42 698.91,405.59 699.18,406.61 699.45,407.94 699.72,405.17 699.99,407.17 700.25,407.99 700.52,408.86 700.79,409.19 701.06,411.81 701.33,409.92 701.59,407.81 701.86,408.97 702.13,409.35 702.4,409.62 702.66,409.42 702.93,410.68 703.2,408.68 703.47,409.62 703.74,412.56 704,412.93 704.27,412.37 704.54,413.11 704.81,412.86 705.08,412.62 705.34,414.27 705.61,413.74 705.88,414.04 706.15,411.39 706.42,417.59 706.68,416.03 706.95,416.02 707.22,415.76 707.49,415.73 707.76,415.7 708.02,415.69 708.29,416.97 708.56,415.67 708.83,416.86 709.09,418.31 709.36,418.23 709.63,416.81 709.9,419.45 710.17,417.29 710.43,419.64 710.7,419.24 710.97,419.75 711.24,419.86 711.51,418.11 711.77,419.9 712.04,418.82 712.31,420.56 712.58,420.67 712.85,421.23 713.11,419.72 713.38,420.76 713.65,420.65 713.92,420.79 714.18,423.23 714.45,422.49 714.72,422.44 714.99,424.41 715.26,423.53 715.52,423.42 715.79,425.25 716.06,421.19 716.33,425.32 716.6,424.73 716.86,425.12 717.13,426.68 717.4,425.49 717.67,425.52 717.94,425.46 718.2,425.83 718.47,425.39 718.74,425.29 719.01,426.75 719.27,424.92 719.54,423.42 719.81,424.32 720.08,426.49 720.35,424.34 720.61,421.68 720.88,421.55 721.15,424.24 721.42,423.09 721.69,423.16 721.95,422.6 722.22,421.93 722.49,422.66 722.76,422.97 723.03,420.4 723.29,420.74 723.56,424.08 723.83,422.51 724.1,422.02 724.37,422.04 724.63,421.01 724.9,421.44 725.17,422.39 725.44,418.45 725.7,422.09 725.97,420.03 726.24,420.47 726.51,419.48 726.78,418.93 727.04,418.18 727.31,418.47 727.58,419.28 727.85,419.06 728.12,419.09 728.38,419.07 728.65,418.45 728.92,416.34 729.19,417.21 729.46,420.01 729.72,417.22 729.99,415.5 730.26,416.79 730.53,415.7 730.79,417.94 731.06,416.48 731.33,414.81 731.6,414.78 731.87,416.01 732.13,412.55 732.4,413.33 732.67,415.19 732.94,413.15 733.21,414.68 733.47,415.05 733.74,412.98 734.01,413.13 734.28,415.92 734.55,417.34 734.81,416.71 735.08,416.46 735.35,417.62 735.62,418.39 735.88,418.03 736.15,419.14 736.42,416.97 736.69,418.84 736.96,418.26 737.22,421.73 737.49,422.87 737.76,421.78 738.03,423.95 738.3,426.24 738.56,422.69 738.83,425.42 739.1,423.62 739.37,427.92 739.64,423.31 739.9,423.33 740.17,425 740.44,425.23 740.71,425.01 740.98,426.4 741.24,426.48 741.51,427.99 741.78,425.43 742.05,429.28 742.31,428.52 742.58,429.04 742.85,430.15 743.12,428.43 743.39,428.94 743.65,430.68 743.92,428.9 744.19,430.87 744.46,432.42 744.73,430.79 744.99,432.03 745.26,431.05 745.53,431.25 745.8,430.63 746.07,431.37 746.33,433.62 746.6,430.67 746.87,433.04 747.14,433.55 747.4,434.93 747.67,434.63 747.94,435.47 748.21,432.78 748.48,432.99 748.74,431.73 749.01,435.21 749.28,435.45 749.55,436.18 749.82,436.56 750.08,434.64 750.35,435.8 750.62,437.06 750.89,438.56 751.16,436.7 751.42,437.54 751.69,434.74 751.96,436.02 752.23,435.49 752.49,438.03 752.76,436.07 753.03,438 753.3,437.63 753.57,437.78 753.83,436.39 754.1,438.56 754.37,437.36 754.64,437.97 754.91,436.84 755.17,438.54 755.44,440.02 755.71,438.48 755.98,438.73 756.25,439.9 756.51,439.45 756.78,440.06 757.05,438.82 757.32,438.46 757.59,438.71 757.85,439.32 758.12,439.54 758.39,438.48 758.66,436.7 758.92,436.54 759.19,434.45 759.46,435.79 759.73,434.99 760,433.81 760.26,434.81 760.53,432.4 760.8,431.66 761.07,431.75 761.34,429.9 761.6,430.38 761.87,426.97 762.14,425.03 762.41,421.9 762.68,423.08 762.94,419.54 763.21,415.75 763.48,416.53 763.75,414.84 764.01,410.04 764.28,410.44 764.55,406.57 764.82,410.29 765.09,409.69 765.35,411.26 765.62,411.03 765.89,411.5 766.16,413.53 766.43,413.96 766.69,415.2 766.96,413.48 767.23,416.63 767.5,417.95 767.77,419.36 768.03,420.07 768.3,419.19 768.57,418.52 768.84,422.02 769.11,420.28 769.37,419.87 769.64,421.6 769.91,421.52 770.18,424.87 770.44,422.92 770.71,423.27 770.98,427.41 771.25,427.27 771.52,426.6 771.78,425.01 772.05,429.74 772.32,427.47 772.59,429.88 772.86,429.75 773.12,431.88 773.39,432.59 773.66,433.58 773.93,431.85 774.2,435.12 774.46,434 774.73,434.08 775,435.13 775.27,436.72 775.53,436.82 775.8,438.28 776.07,439.36 776.34,439.41 776.61,437.65 776.87,436.61 777.14,438.62 777.41,436.67 777.68,439.48 777.95,437.68 778.21,439.37 778.48,440.06 778.75,439.13 779.02,440.08 779.29,439.02 779.55,439.96 779.82,439.7 780.09,438.75 780.36,441.34 780.62,438.92 780.89,441.1 781.16,441.19 781.43,440.99 781.7,441.75 781.96,441.36 782.23,440.19 782.5,441.81 782.77,441.62 783.04,441.37 783.3,440.86 783.57,442.74 783.84,443.79 784.11,443.03 784.38,442.07 784.64,442.58 784.91,442.65 785.18,443.83 785.45,445.15 785.72,444.13 785.98,444.69 786.25,445.27 786.52,443.9 786.79,442.23 787.05,446.63 787.32,443.97 787.59,443.53 787.86,443.79 788.13,442.81 788.39,445.76 788.66,442.67 788.93,445.15 789.2,445.16 789.47,445.91 789.73,443.35 790,444.63 790.27,446.85 790.54,445.18 790.81,445.24 791.07,446.31 791.34,445.63 791.61,446.16 791.88,446.63 792.14,446.5 792.41,445.39 792.68,446.29 792.95,447.96 793.22,446.29 793.48,446.38 793.75,446.82 794.02,446.68 794.29,446.79 794.56,447.47 794.82,446.71 795.09,449.57 795.36,447.94 795.63,448.06 795.9,445.96 796.16,447.47 796.43,447.34 796.7,447.31 796.97,448.27 797.23,449.1 797.5,448.08 797.77,448.49 798.04,447.47 798.31,447.37 798.57,448.8 798.84,448.24 799.11,448.86 799.38,448.39 799.65,450.1 799.91,448.81 800.18,448.46 800.45,449.29 800.72,448.29 800.99,448.88 801.25,449.33 801.52,447.55 801.79,449.45 802.06,449.34 802.33,448.26 802.59,449.71 802.86,450.92 803.13,448.99 803.4,448.48 803.66,450.07 803.93,449.48 804.2,449.3 804.47,449.07 804.74,448.73 805,449.56 805.27,450.8 805.54,449.23 805.81,450.24 806.08,449.18 806.34,448.88 806.61,450.85 806.88,450.07 807.15,448.89 807.42,450.7 807.68,449.87 807.95,449.56 808.22,451.53 808.49,450.06 808.75,451.24 809.02,451.81 809.29,450.77 809.56,450.59 809.83,450.2 810.09,451.09 810.36,450.83 810.63,451.33 810.9,449.45 811.17,450.35 811.43,450.18 811.7,450.3 811.97,450.59 812.24,450.07 812.51,448.99 812.77,450.76 813.04,451.05 813.31,449.23 813.58,450.57 813.84,451.68 814.11,450.22 814.38,451.57 814.65,452.28 814.92,450.56 815.18,451.59 815.45,452.23 815.72,452.71 815.99,452.31 816.26,451.42 816.52,453.76 816.79,453.29 817.06,452.32 817.33,451.28 817.6,452.09 817.86,451.8 818.13,451.94 818.4,453.08 818.67,451.73 818.94,452.44 819.2,453.12 819.47,453.67 819.74,452.72 820.01,453.26 820.27,452.85 820.54,452.59 820.81,451.73 821.08,451.6 821.35,451.73 821.61,451.69 821.88,453.57 822.15,452.22 822.42,453.02 822.69,453.35 822.95,452.68 823.22,452.51 823.49,453.05 823.76,454.38 824.03,454 824.29,453.76 824.56,454.13 824.83,453.01 825.1,454.39 825.36,454.05 825.63,454.06 825.9,453.47 826.17,452.34 826.44,454.08 826.7,453.53 826.97,452.51 827.24,453.9 827.51,453.94 827.78,454.89 828.04,453.77 828.31,454.53 828.58,454 828.85,454.08 829.12,453.78 829.38,453.73 829.65,453.79 829.92,454.89 830.19,453.91 830.46,454.31 830.72,453.5 830.99,453.14 831.26,453.3 831.53,452.66 831.79,453.03 832.06,453.7 832.33,453.81 832.6,454.82 832.87,453.32 833.13,451.67 833.4,453.38 833.67,452.74 833.94,454.15 834.21,453.19 834.47,454.39 834.74,453.74 835.01,455.55 835.28,455.25 835.55,454.91 835.81,452.6 836.08,454.56 836.35,453.67 836.62,453.96 836.88,453.17 837.15,454.88 837.42,453.77 837.69,452.96 837.96,452.29 838.22,453.17 838.49,455.1 838.76,452.95 839.03,452.22 839.3,454.79 839.56,453.95 839.83,453.08 840.1,454.77 840.37,454.99 840.64,454.87 840.9,454.23 841.17,454.77 841.44,453.67 841.71,454.31 841.97,455.29 842.24,453.88 842.51,453.51 842.78,454.07 843.05,454.83 843.31,453.69 843.58,453.49 843.85,454.97 844.12,452.78 844.39,453.88 844.65,453.98 844.92,454.27 845.19,453.26 845.46,454.76 845.73,454.23 845.99,453.64 846.26,452.07 846.53,453.03 846.8,453.68 847.07,453.15 847.33,453.98 847.6,452.55 847.87,452.01 848.14,452.32 848.4,451.11 848.67,452.25 848.94,450.79 849.21,452.34 849.48,450.01 849.74,452.22 850.01,450.25 850.28,450.74 850.55,449.78 850.82,450.94 851.08,450.08 851.35,450.22 851.62,450.18 851.89,451.09 852.16,449.47 852.42,450.07 852.69,449.57 852.96,449.97 853.23,449.55 853.49,449.93 853.76,448.63 854.03,446.86 854.3,448.21 854.57,449.4 854.83,448.72 855.1,448.19 855.37,448.4 855.64,448.7 855.91,448.19 856.17,445.89 856.44,446.92 856.71,447.58 856.98,448.29 857.25,447.65 857.51,446.11 857.78,445.66 858.05,446.43 858.32,447.02 858.58,445.78 858.85,446.07 859.12,446.86 859.39,447.33 859.66,446.28 859.92,447.39 860.19,445.63 860.46,446.98 860.73,446.78 861,447.78 861.26,446.28 861.53,447.51 861.8,449.2 862.07,447.79 862.34,446.15 862.6,447.03 862.87,447.89 863.14,447.7 863.41,447.78 863.68,449.9 863.94,449.71 864.21,448.85 864.48,449.23 864.75,448.63 865.01,449 865.28,446.6 865.55,448.99 865.82,448.55 866.09,448.37 866.35,445.59 866.62,446.8 866.89,447.37 867.16,448.78 867.43,449.21 867.69,449.43 867.96,448.52 868.23,448.12 868.5,448.95 868.77,450.71 869.03,447.67 869.3,448.7 869.57,449.65 869.84,450.72 870.1,448.46 870.37,449 870.64,448.32 870.91,448.03 871.18,449.61 871.44,448.4 871.71,448.3 871.98,449.53 872.25,449.76 872.52,449.92 872.78,448.42 873.05,448.48 873.32,451.04 873.59,450.4 873.86,450.17 874.12,448.77 874.39,450.64 874.66,449.22 874.93,449.43 875.2,451.38 875.46,450.23 875.73,450.35 876,451.94 876.27,449.57 876.53,448.72 876.8,451.71 877.07,452.55 877.34,450.86 877.61,452.94 877.87,451.77 878.14,451.77 878.41,451.09 878.68,451.88 878.95,453.08 879.21,450.74 879.48,451.13 879.75,451.88 880.02,451.49 880.29,451.54 880.55,452.1 880.82,451.44 881.09,451.7 881.36,451.99 881.62,451.16 881.89,453.64 882.16,450.31 882.43,450.26 882.7,449.6 882.96,450.11 883.23,451.39 883.5,450.78 883.77,447.99 884.04,449.27 884.3,449.98 884.57,448.26 884.84,449.58 885.11,449.15 885.38,449.38 885.64,449.08 885.91,449.01 886.18,447.98 886.45,447.99 886.71,448.53 886.98,448.24 887.25,449.77 887.52,449.18 887.79,447.03 888.05,448.37 888.32,447.31 888.59,448.79 888.86,448.18 889.13,448.52 889.39,446.01 889.66,447.05 889.93,446.95 890.2,447.94 890.47,447.59 890.73,448.18 891,446.89 891.27,446.35 891.54,446.18 891.81,447.7 892.07,447.9 892.34,446.75 892.61,447.22 892.88,448.59 893.14,447.82 893.41,447.75 893.68,448.03 893.95,449.02 894.22,448.31 894.48,449.37 894.75,448.8 895.02,449.25 895.29,451.01 895.56,449.24 895.82,447.57 896.09,451.88 896.36,448.13 896.63,447.9 896.9,449.41 897.16,449.45 897.43,449.28 897.7,448.69 897.97,448.49 898.23,448.53 898.5,450.72 898.77,450.63 899.04,450.65 899.31,451.19 899.57,451.55 899.84,450.98 900.11,450.68 900.38,451.08 900.65,450.52 900.91,450.01 901.18,452.88 901.45,450.31 901.72,451.34 901.99,450.92 902.25,451.35 902.52,451.24 902.79,449.44 903.06,452.41 903.32,451.47 903.59,451.57 903.86,451.09 904.13,451.35 904.4,452.59 904.66,451.38 904.93,452.73 905.2,453.9 905.47,452.54 905.74,452.5 906,452.37 906.27,451.33 906.54,452.97 906.81,449.53 907.08,450.09 907.34,448.74 907.61,449.65 907.88,448.32 908.15,448.34 908.42,446.27 908.68,446.99 908.95,447.21 909.22,446.63 909.49,445.88 909.75,445.21 910.02,444.17 910.29,443.31 910.56,438.71 910.83,439.21 911.09,435.8 911.36,434.96 911.63,430.58 911.9,430.97 912.17,425.98 912.43,424.11 912.7,424.38 912.97,426.08 913.24,425.4 913.51,427.1 913.77,426.28 914.04,427.5 914.31,429.01 914.58,427.92 914.84,429.34 915.11,430.29 915.38,431.35 915.65,429.46 915.92,430.07 916.18,428.72 916.45,429.92 916.72,428.52 916.99,429.8 917.26,429.63 917.52,427.71 917.79,425.77 918.06,425.67 918.33,424.9 918.6,421.47 918.86,420.22 919.13,418.31 919.4,415.67 919.67,414.18 919.93,410.08 920.2,411.53 920.47,408.92 920.74,408.1 921.01,402.67 921.27,403.3 921.54,400.54 921.81,401.53 922.08,400.57 922.35,396.53 922.61,396.8 922.88,397.5 923.15,394.77 923.42,396.1 923.69,397.43 923.95,392.7 924.22,391.7 924.49,393.96 924.76,389.85 925.03,390.06 925.29,387.65 925.56,381.89 925.83,386.07 926.1,383.45 926.36,386.91 926.63,384.08 926.9,386.29 927.17,384.6 927.44,381.99 927.7,380.98 927.97,383.39 928.24,381.05 928.51,377.4 928.78,379.9 929.04,384.52 929.31,380.5 929.58,381.24 929.85,380.69 930.12,380.86 930.38,382.82 930.65,386.99 930.92,382.75 931.19,384.59 931.45,382.82 931.72,387.4 931.99,389.32 932.26,389.28 932.53,393.52 932.79,394.83 933.06,393 933.33,394.52 933.6,397.29 933.87,394.37 934.13,397.39 934.4,394.84 934.67,394.7 934.94,392.39 935.21,391.9 935.47,395.87 935.74,389.52 936.01,394.72 936.28,391.82 936.55,393.7 936.81,392.4 937.08,392.79 937.35,391.89 937.62,391.88 937.88,391.9 938.15,392.32 938.42,391.06 938.69,393.07 938.96,394.97 939.22,396.36 939.49,396.77 939.76,398.93 940.03,398.96 940.3,403.01 940.56,402.51 940.83,404.62 941.1,406.32 941.37,406.27 941.64,408 941.9,405.82" fill="none" stroke="#1010ff" stroke-width="1.5" stroke-linejoin="round"/><polyline points="98.27,313.43 99.08,313.99 99.88,314.85 100.68,315.94 101.49,316.9 102.29,317.94 103.1,318.86 103.9,319.74 104.7,320.36 105.51,320.75 106.31,320.9 107.11,321.24 107.92,321.55 108.72,321.94 109.53,322.73 110.33,323.98 111.13,325.6 111.94,327.16 112.74,328.36 113.54,329.06 114.35,330.35 115.15,332.22 115.96,333.71 116.76,335.64 117.56,337.47 118.37,339.32 119.17,342.1 119.97,345.26 120.78,347.77 121.58,349.68 122.38,351.45 123.19,352.21 123.99,352.38 124.8,351.99 125.6,351.33 126.4,350.17 127.21,349.03 128.01,348.03 128.81,347.19 129.62,346.75 130.42,346.38 131.23,346 132.03,346.58 132.83,346.76 133.64,347.46 134.44,348.29 135.24,349.48 136.05,350.32 136.85,351.14 137.66,352.04 138.46,352.23 139.26,352.31 140.07,351.98 140.87,351.96 141.67,351.37 142.48,350.49 143.28,349.93 144.08,349.18 144.89,348.81 145.69,348.53 146.5,348.79 147.3,349.11 148.1,349.97 148.91,351.22 149.71,352.3 150.51,353.56 151.32,355.02 152.12,356.76 152.93,358.55 153.73,360.09 154.53,361.46 155.34,362.83 156.14,363.88 156.94,365.5 157.75,367.02 158.55,368.43 159.36,369.94 160.16,371.65 160.96,373.63 161.77,375.04 162.57,376.43 163.37,377.46 164.18,378.19 164.98,378.47 165.79,378.47 166.59,378.16 167.39,376.93 168.2,375.4 169,373.9 169.8,372.18 170.61,370.15 171.41,368.44 172.21,366.86 173.02,364.91 173.82,363.35 174.63,362.19 175.43,361.94 176.23,362.19 177.04,363.07 177.84,364.27 178.64,365.76 179.45,367.37 180.25,369.26 181.06,370.94 181.86,372.13 182.66,372.81 183.47,373 184.27,372.7 185.07,371.95 185.88,370.63 186.68,368.84 187.49,366.53 188.29,364.79 189.09,363.06 189.9,361.54 190.7,360.05 191.5,358.87 192.31,358.01 193.11,357.01 193.92,356.89 194.72,356.24 195.52,355.5 196.33,354.89 197.13,354.84 197.93,354.98 198.74,355.43 199.54,356.29 200.34,357.41 201.15,358.97 201.95,360.81 202.76,362.93 203.56,364.93 204.36,366.42 205.17,367.75 205.97,368.8 206.77,369.83 207.58,370.96 208.38,371.98 209.19,372.79 209.99,373.46 210.79,374.19 211.6,375.42 212.4,376.37 213.2,377.26 214.01,377.96 214.81,378.79 215.62,379.38 216.42,380.11 217.22,380.57 218.03,380.43 218.83,380.42 219.63,380.45 220.44,380.38 221.24,379.9 222.05,379.5 222.85,379.2 223.65,378.17 224.46,377.93 225.26,377.58 226.06,377.4 226.87,377.64 227.67,378.28 228.47,378.99 229.28,379.75 230.08,380.86 230.89,382.39 231.69,384.15 232.49,385.98 233.3,387.72 234.1,389.08 234.9,390.01 235.71,391 236.51,392.13 237.32,393.17 238.12,393.7 238.92,393.92 239.73,378.12 240.53,350.14 241.33,323.84 242.14,300.04 242.94,277.81 243.75,256.31 244.55,236.3 245.35,217.6 246.16,205.94 246.96,217.4 247.76,228.5 248.57,238.17 249.37,246.19 250.17,253.26 250.98,260.02 251.78,265.74 252.59,271.39 253.39,276.16 254.19,280.36 255,284.55 255.8,287.12 256.6,288.67 257.41,288.43 258.21,286.62 259.02,283.52 259.82,280.44 260.62,277.81 261.43,275.5 262.23,274.04 263.03,273.57 263.84,275.07 264.64,278.33 265.45,282.22 266.25,287.5 267.05,291.82 267.86,295.74 268.66,299.34 269.46,303.32 270.27,307.13 271.07,310.26 271.88,313.87 272.68,316.94 273.48,319.9 274.29,323 275.09,325.77 275.89,328.37 276.7,331.4 277.5,333.72 278.3,335.81 279.11,337.57 279.91,338.57 280.72,339.05 281.52,339.26 282.32,338.96 283.13,337.98 283.93,336.76 284.73,336.23 285.54,335.16 286.34,334.86 287.15,334.98 287.95,335.4 288.75,336.58 289.56,338.13 290.36,340.52 291.16,342.95 291.97,345.58 292.77,348.23 293.58,351.1 294.38,354.22 295.18,357.28 295.99,360.25 296.79,362.68 297.59,364.01 298.4,364.59 299.2,364.4 300.01,363.43 300.81,361.03 301.61,357.13 302.42,352.48 303.22,347.12 304.02,341.53 304.83,336.23 305.63,332.36 306.43,328.71 307.24,326.14 308.04,324.63 308.85,324.06 309.65,323.91 310.45,325.31 311.26,327.16 312.06,328.85 312.86,330.82 313.67,333.41 314.47,336.53 315.28,339.3 316.08,342.32 316.88,344.71 317.69,346.57 318.49,348.32 319.29,350.23 320.1,351.88 320.9,353.56 321.71,355.07 322.51,356.4 323.31,357.55 324.12,358.81 324.92,359.75 325.72,360.72 326.53,361.33 327.33,361.36 328.14,361 328.94,360.37 329.74,359.97 330.55,359.41 331.35,359.12 332.15,358.95 332.96,358.51 333.76,358.33 334.56,358.21 335.37,359.01 336.17,359.74 336.98,360.8 337.78,361.73 338.58,362.76 339.39,363.22 340.19,364.01 340.99,364.91 341.8,365.08 342.6,365.14 343.41,365.16 344.21,365.23 345.01,365.62 345.82,366.21 346.62,366.87 347.42,367.5 348.23,368.04 349.03,368.94 349.84,369.8 350.64,370.51 351.44,371.33 352.25,371.93 353.05,372.43 353.85,372.65 354.66,373.1 355.46,373.63 356.26,373.8 357.07,374.33 357.87,374.93 358.68,375.69 359.48,376.42 360.28,377.31 361.09,378.59 361.89,379.97 362.69,381.72 363.5,383.18 364.3,384.92 365.11,386.55 365.91,388.15 366.71,389.61 367.52,391.12 368.32,392.15 369.12,392.96 369.93,393.81 370.73,394.62 371.54,395.13 372.34,395.39 373.14,395.92 373.95,396.01 374.75,396.39 375.55,396.82 376.36,397.39 377.16,397.91 377.97,398.27 378.77,398.77 379.57,399.39 380.38,400.21 381.18,400.75 381.98,401.33 382.79,401.8 383.59,402.27 384.39,402.8 385.2,403.29 386,403.61 386.81,404.26 387.61,404.43 388.41,404.49 389.22,404.37 390.02,404.07 390.82,403.56 391.63,402.8 392.43,402.33 393.24,401.42 394.04,400.47 394.84,399.84 395.65,399.4 396.45,398.95 397.25,398.43 398.06,397.9 398.86,397.17 399.67,396.21 400.47,395.28 401.27,394.5 402.08,393.26 402.88,392.28 403.68,391.56 404.49,391.09 405.29,390.66 406.1,390.59 406.9,390.84 407.7,391.16 408.51,391.57 409.31,391.65 410.11,391.53 410.92,391.15 411.72,390.37 412.52,389.76 413.33,389.17 414.13,388.08 414.94,386.82 415.74,385.66 416.54,384.74 417.35,384.06 418.15,383.46 418.95,382.71 419.76,381.87 420.56,381.53 421.37,381.37 422.17,381.08 422.97,381.29 423.78,381.52 424.58,381.67 425.38,382.03 426.19,382.39 426.99,382.92 427.8,383.4 428.6,383.94 429.4,384.56 430.21,384.96 431.01,386.01 431.81,387.03 432.62,388.04 433.42,388.94 434.23,389.66 435.03,390.51 435.83,391.58 436.64,392.43 437.44,393.18 438.24,393.76 439.05,394.4 439.85,395.36 440.65,396.12 441.46,397.12 442.26,397.89 443.07,398.75 443.87,399.35 444.67,399.84 445.48,400.31 446.28,400.83 447.08,401.29 447.89,401.74 448.69,402.16 449.5,402.51 450.3,402.26 451.1,372.45 451.91,333.33 452.71,295.88 453.51,260.11 454.32,225.59 455.12,190.98 455.93,156.82 456.73,125.03 457.53,111.19 458.34,119.62 459.14,127.62 459.94,133.93 460.75,138.06 461.55,143.01 462.35,146.2 463.16,146.83 463.96,145.87 464.77,143.75 465.57,139.49 466.37,134.45 467.18,130.72 467.98,126.77 468.78,123.79 469.59,122.12 470.39,121.8 471.2,122.14 472,124.76 472.8,128.98 473.61,133.4 474.41,137.65 475.21,142.55 476.02,148.03 476.82,153.44 477.63,158.51 478.43,164.23 479.23,169.3 480.04,174.23 480.84,179.44 481.64,184.09 482.45,188.58 483.25,192.39 484.06,196.91 484.86,201.11 485.66,204.99 486.47,208.24 487.27,209.85 488.07,210.48 488.88,209.55 489.68,207.98 490.48,205.52 491.29,202.17 492.09,198.89 492.9,194.84 493.7,191.47 494.5,187.88 495.31,184.27 496.11,179.45 496.91,174.35 497.72,168.69 498.52,162.63 499.33,156.37 500.13,149.42 500.93,142.38 501.74,135.69 502.54,128.96 503.34,122.05 504.15,114.89 504.95,105.18 505.76,95.05 506.56,83.44 507.36,73.99 508.17,65.84 508.97,57.61 509.77,51.47 510.58,47.39 511.38,46.24 512.19,47.04 512.99,50.48 513.79,54.3 514.6,58.47 515.4,65.27 516.2,72.18 517.01,78.71 517.81,85.66 518.61,92.62 519.42,99.33 520.22,105.55 521.03,110.02 521.83,111.02 522.63,110.36 523.44,106.44 524.24,102.24 525.04,99.67 525.85,98.88 526.65,98.72 527.46,101.07 528.26,106.65 529.06,114.58 529.87,126.04 530.67,138.61 531.47,150.88 532.28,161.9 533.08,171.42 533.89,181.42 534.69,190.17 535.49,197.88 536.3,204.96 537.1,210.76 537.9,215.71 538.71,218.4 539.51,220.67 540.32,221.12 541.12,219.98 541.92,219.48 542.73,219.04 543.53,219.2 544.33,220.29 545.14,222.31 545.94,225.09 546.74,228.49 547.55,231.99 548.35,235.53 549.16,239.1 549.96,242.67 550.76,245.93 551.57,249.07 552.37,251.83 553.17,253.66 553.98,255.39 554.78,256.74 555.59,257.17 556.39,256.67 557.19,255.22 558,253.19 558.8,251.41 559.6,249.61 560.41,247.97 561.21,246.26 562.02,245.73 562.82,245.01 563.62,245.58 564.43,245.89 565.23,247.18 566.03,248.71 566.84,250.29 567.64,253 568.44,255.59 569.25,258.25 570.05,260.93 570.86,263.36 571.66,265.93 572.46,268.83 573.27,271.36 574.07,274.05 574.87,277.09 575.68,280.47 576.48,283.58 577.29,287 578.09,290.06 578.89,293.44 579.7,297.2 580.5,300.05 581.3,302.16 582.11,303.83 582.91,304.55 583.72,305.38 584.52,305.47 585.32,304.61 586.13,303.31 586.93,302.61 587.73,302.87 588.54,303.21 589.34,303.79 590.15,304.98 590.95,306.46 591.75,309.46 592.56,312.58 593.36,315.6 594.16,318.07 594.97,320.79 595.77,323.53 596.57,326.17 597.38,329.15 598.18,331.77 598.99,333.63 599.79,335.37 600.59,336.86 601.4,337.96 602.2,338.95 603,339.67 603.81,340.4 604.61,340.18 605.42,339.68 606.22,339.92 607.02,340.54 607.83,341.09 608.63,342.27 609.43,344 610.24,344.99 611.04,346.65 611.85,348.73 612.65,351.11 613.45,353.42 614.26,356.04 615.06,358.45 615.86,360.65 616.67,363.14 617.47,365.86 618.28,368.47 619.08,370.62 619.88,372.71 620.69,374.49 621.49,376.47 622.29,378.29 623.1,379.86 623.9,381.24 624.7,382.87 625.51,384.69 626.31,386.73 627.12,388.64 627.92,390.51 628.72,392.4 629.53,394.47 630.33,396.68 631.13,398.56 631.94,400.39 632.74,401.95 633.55,403.26 634.35,404.16 635.15,404.83 635.96,405.41 636.76,405.45 637.56,405.12 638.37,404.49 639.17,403.81 639.98,402.93 640.78,401.35 641.58,399.12 642.39,395.93 643.19,392.32 643.99,388.2 644.8,383.9 645.6,379.03 646.4,374.03 647.21,369.71 648.01,366.24 648.82,363.33 649.62,360.85 650.42,358.56 651.23,356.61 652.03,354.95 652.83,353.73 653.64,352.86 654.44,352.06 655.25,351.81 656.05,352.28 656.85,353.55 657.66,355.57 658.46,358.26 659.26,361.02 660.07,364.14 660.87,366.91 661.68,370.15 662.48,372.93 663.28,375.88 664.09,377.82 664.89,378.56 665.69,378.07 666.5,376.53 667.3,373.86 668.11,370.02 668.91,365.43 669.71,360.65 670.52,356 671.32,352.33 672.12,349.48 672.93,347.6 673.73,347.2 674.53,348.12 675.34,350.11 676.14,352.53 676.95,355.27 677.75,358.15 678.55,361.43 679.36,365.28 680.16,369.09 680.96,372.1 681.77,374.81 682.57,377.36 683.38,379.51 684.18,381.48 684.98,382.98 685.79,384.32 686.59,385.15 687.39,386.3 688.2,387.64 689,389.22 689.81,390.53 690.61,392.13 691.41,393.81 692.22,395.73 693.02,397.31 693.82,399.26 694.63,401.04 695.43,402.18 696.24,403.25 697.04,404.27 697.84,405.33 698.65,405.95 699.45,406.54 700.25,406.76 701.06,407.15 701.86,407.53 702.66,407.94 703.47,408.38 704.27,408.98 705.08,409.62 705.88,410.41 706.68,411.35 707.49,412.11 708.29,412.88 709.09,413.72 709.9,414.62 710.7,415.59 711.51,416.38 712.31,417.06 713.11,417.89 713.92,418.52 714.72,419.45 715.52,420.38 716.33,421.2 717.13,422.06 717.94,422.71 718.74,423.5 719.54,424.14 720.35,424.64 721.15,424.79 721.95,424.74 722.76,424.66 723.56,424.23 724.37,423.71 725.17,423.26 725.97,422.61 726.78,422.11 727.58,421.64 728.38,421.02 729.19,420.41 729.99,419.86 730.79,419.19 731.6,418.55 732.4,417.85 733.21,417.08 734.01,416.47 734.81,416.09 735.62,416 736.42,416.04 737.22,416.44 738.03,417.12 738.83,418.2 739.64,419.46 740.44,420.75 741.24,422.1 742.05,423.47 742.85,424.64 743.65,425.95 744.46,427.05 745.26,427.9 746.07,428.67 746.87,429.57 747.67,430.52 748.48,431.27 749.28,432.04 750.08,432.82 750.89,433.6 751.69,434.22 752.49,434.87 753.3,435.52 754.1,436.04 754.91,436.56 755.71,437.19 756.51,437.67 757.32,438.06 758.12,438.27 758.92,438.41 759.73,438.17 760.53,437.75 761.34,436.92 762.14,435.69 762.94,433.52 763.75,430.74 764.55,427.22 765.35,423.91 766.16,421.08 766.96,418.73 767.77,416.94 768.57,415.56 769.37,415.28 770.18,415.86 770.98,417.33 771.78,419.34 772.59,421.35 773.39,423.27 774.2,425.3 775,427.2 775.8,429.17 776.61,431.19 777.41,432.88 778.21,434.34 779.02,435.74 779.82,436.9 780.62,437.86 781.43,438.65 782.23,439.41 783.04,439.74 783.84,440.22 784.64,440.74 785.45,441.38 786.25,442.04 787.05,442.52 787.86,442.89 788.66,443.21 789.47,443.74 790.27,444.16 791.07,444.55 791.88,444.87 792.68,445.08 793.48,445.44 794.29,445.74 795.09,446.12 795.9,446.33 796.7,446.68 797.5,446.9 798.31,447.15 799.11,447.48 799.91,447.71 800.72,447.98 801.52,448.14 802.33,448.3 803.13,448.56 803.93,448.71 804.74,448.9 805.54,449.01 806.34,449.19 807.15,449.31 807.95,449.47 808.75,449.69 809.56,449.85 810.36,449.99 811.17,450.17 811.97,450.27 812.77,450.35 813.58,450.33 814.38,450.47 815.18,450.63 815.99,450.81 816.79,451.12 817.6,451.31 818.4,451.49 819.2,451.74 820.01,452.1 820.81,452.27 821.61,452.3 822.42,452.42 823.22,452.38 824.03,452.57 824.83,452.79 825.63,452.96 826.44,453.03 827.24,453.17 828.04,453.38 828.85,453.6 829.65,453.75 830.46,453.8 831.26,453.7 832.06,453.65 832.87,453.69 833.67,453.7 834.47,453.68 835.28,453.68 836.08,453.66 836.88,453.66 837.69,453.7 838.49,453.75 839.3,453.7 840.1,453.77 840.9,453.85 841.71,453.91 842.51,453.95 843.31,453.93 844.12,453.92 844.92,453.94 845.73,453.95 846.53,453.88 847.33,453.71 848.14,453.42 848.94,453.09 849.74,452.86 850.55,452.44 851.35,452.11 852.16,451.7 852.96,451.27 853.76,450.85 854.57,450.37 855.37,449.99 856.17,449.58 856.98,449.16 857.78,448.76 858.58,448.31 859.39,447.94 860.19,447.63 861,447.47 861.8,447.34 862.6,447.22 863.41,447.31 864.21,447.45 865.01,447.66 865.82,447.89 866.62,447.86 867.43,448.02 868.23,448.13 869.03,448.27 869.84,448.37 870.64,448.42 871.44,448.39 872.25,448.53 873.05,448.7 873.86,448.95 874.66,449.09 875.46,449.27 876.27,449.58 877.07,449.76 877.87,450.2 878.68,450.57 879.48,450.87 880.29,451.14 881.09,451.37 881.89,451.56 882.7,451.52 883.5,451.45 884.3,451.13 885.11,450.86 885.91,450.56 886.71,450.11 887.52,449.78 888.32,449.37 889.13,449.08 889.93,448.74 890.73,448.63 891.54,448.38 892.34,448.1 893.14,448.04 893.95,448.02 894.75,448.07 895.56,448.19 896.36,448.35 897.16,448.45 897.97,448.6 898.77,448.94 899.57,449.27 900.38,449.64 901.18,449.94 901.99,450.13 902.79,450.37 903.59,450.77 904.4,451.07 905.2,451.43 906,451.64 906.81,451.72 907.61,451.55 908.42,451.07 909.22,450.46 910.02,449.7 910.83,448.46 911.63,446.34 912.43,443.35 913.24,440.27 914.04,437.59 914.84,435.18 915.65,433.08 916.45,431.22 917.26,429.64 918.06,428.48 918.86,427.47 919.67,426.29 920.47,424.29 921.27,421.47 922.08,418.04 922.88,414.18 923.69,410.18 924.49,405.85 925.29,401.76 926.1,397.85 926.9,394.73 927.7,392 928.51,389.66 929.31,387.6 930.12,385.74 930.92,384.52 931.72,383.81 932.53,384.26 933.33,385.37 934.13,386.56 934.94,387.89 935.74,389.28 936.55,390.86 937.35,391.9 938.15,392.98 938.96,393.53 939.76,394.16 940.56,394.83 941.37,396.04" fill="none" stroke="#ee0000" stroke-width="1.9" stroke-linejoin="round"/><polyline points="117.83,324.27 118.9,325.76 119.97,327.52 121.05,329.16 122.12,330.78 123.19,332.29 124.26,333.67 125.33,334.88 126.4,335.97 127.47,336.93 128.55,337.86 129.62,338.97 130.69,339.98 131.76,341.04 132.83,342.2 133.9,343.33 134.98,344.49 136.05,345.69 137.12,346.6 138.19,347.28 139.26,347.98 140.33,348.74 141.41,349.34 142.48,349.71 143.55,349.89 144.62,349.88 145.69,349.67 146.76,349.44 147.84,349.53 148.91,349.7 149.98,350.01 151.05,350.43 152.12,351.03 153.19,351.72 154.27,352.54 155.34,353.55 156.41,354.34 157.48,355.36 158.55,356.41 159.62,357.45 160.7,358.64 161.77,359.82 162.84,360.74 163.91,361.73 164.98,362.72 166.05,363.73 167.12,364.71 168.2,365.5 169.27,366.24 170.34,366.78 171.41,367.34 172.48,367.89 173.55,368.22 174.63,368.46 175.7,368.74 176.77,369.18 177.84,369.67 178.91,370.14 179.98,370.55 181.06,370.9 182.13,371.07 183.2,371.2 184.27,371.08 185.34,370.78 186.41,370.25 187.49,369.21 188.56,368.27 189.63,367.49 190.7,366.66 191.77,365.91 192.84,365.12 193.92,364.34 194.99,363.66 196.06,363.14 197.13,362.86 198.2,362.76 199.27,362.77 200.34,362.93 201.42,363.17 202.49,363.33 203.56,363.42 204.63,363.42 205.7,363.3 206.77,363.17 207.85,363.17 208.92,363.29 209.99,363.54 211.06,363.9 212.13,364.45 213.2,365.09 214.28,366.07 215.35,367.05 216.42,367.97 217.49,368.9 218.56,369.79 219.63,370.71 220.71,371.67 221.78,372.68 222.85,373.74 223.92,374.52 224.99,375.2 226.06,375.81 227.14,376.52 228.21,377.21 229.28,377.85 230.35,378.44 231.42,379.19 232.49,380.06 233.56,380.91 234.64,381.65 235.71,382.32 236.78,383.04 237.85,383.74 238.92,384.31 239.99,378.53 241.07,370.01 242.14,362.34 243.21,355.47 244.28,349.14 245.35,343.42 246.42,338.07 247.5,333.24 248.57,328.81 249.64,324.52 250.71,320.57 251.78,316.84 252.85,313.28 253.93,309.71 255,306.32 256.07,302.61 257.14,298.41 258.21,293.57 259.28,288.28 260.36,283.23 261.43,278.65 262.5,274.3 263.57,269.95 264.64,265.99 265.71,262.12 266.79,264.95 267.86,270.59 268.93,275.56 270,279.87 271.07,283.84 272.14,287.44 273.21,290.77 274.29,293.75 275.36,296.52 276.43,299.26 277.5,301.88 278.57,304.23 279.64,306.26 280.72,308.03 281.79,309.5 282.86,311.19 283.93,313.25 285,315.91 286.07,318.91 287.15,321.69 288.22,324.21 289.29,326.66 290.36,329.25 291.43,331.62 292.5,334 293.58,336.19 294.65,338.49 295.72,340.67 296.79,342.78 297.86,344.52 298.93,345.8 300.01,346.75 301.08,347.15 302.15,347.01 303.22,346.46 304.29,345.6 305.36,344.82 306.43,344.19 307.51,343.7 308.58,343.35 309.65,343.04 310.72,343.1 311.79,343.15 312.86,343.32 313.94,343.71 315.01,344.06 316.08,344.3 317.15,344.25 318.22,344.1 319.29,343.96 320.37,343.93 321.44,343.81 322.51,343.53 323.58,343.14 324.65,342.94 325.72,343.01 326.8,343.42 327.87,344.18 328.94,345.17 330.01,346.44 331.08,347.87 332.15,349.27 333.23,350.71 334.3,352.15 335.37,353.6 336.44,355.12 337.51,356.4 338.58,357.53 339.65,358.49 340.73,359.31 341.8,359.93 342.87,360.44 343.94,361.09 345.01,361.71 346.08,362.3 347.16,362.84 348.23,363.16 349.3,363.52 350.37,363.99 351.44,364.5 352.51,365.05 353.59,365.53 354.66,366.05 355.73,366.73 356.8,367.43 357.87,368.28 358.94,369.19 360.02,370.05 361.09,371.02 362.16,371.96 363.23,372.9 364.3,373.91 365.37,375.08 366.45,376.24 367.52,377.39 368.59,378.55 369.66,379.78 370.73,381 371.8,382.18 372.88,383.32 373.95,384.26 375.02,385.37 376.09,386.47 377.16,387.59 378.23,388.66 379.3,389.79 380.38,390.93 381.45,392.07 382.52,393.2 383.59,394.31 384.66,395.42 385.73,396.39 386.81,397.44 387.88,398.26 388.95,398.89 390.02,399.4 391.09,399.75 392.16,399.99 393.24,400.25 394.31,400.36 395.38,400.53 396.45,400.63 397.52,400.58 398.59,400.5 399.67,400.29 400.74,400.1 401.81,399.75 402.88,399.39 403.95,398.97 405.02,398.64 406.1,398.22 407.17,397.81 408.24,397.47 409.31,396.97 410.38,396.39 411.45,395.63 412.52,394.89 413.6,394.07 414.67,393.22 415.74,392.41 416.81,391.63 417.88,390.92 418.95,390.12 420.03,389.35 421.1,388.74 422.17,388.02 423.24,387.44 424.31,386.93 425.38,386.47 426.46,386.13 427.53,385.94 428.6,385.79 429.67,385.66 430.74,385.63 431.81,385.62 432.89,385.66 433.96,385.62 435.03,385.6 436.1,385.74 437.17,386.01 438.24,386.4 439.32,386.87 440.39,387.38 441.46,388.08 442.53,388.8 443.6,389.62 444.67,390.35 445.74,391.2 446.82,392.1 447.89,392.96 448.96,393.9 450.03,394.73 451.1,387.88 452.17,375.6 453.25,364.16 454.32,353.35 455.39,342.54 456.46,332.26 457.53,322.36 458.6,312.45 459.68,302.84 460.75,293.24 461.82,283.59 462.89,273.52 463.96,263.05 465.03,252.03 466.11,240.59 467.18,229.38 468.25,218.16 469.32,207.16 470.39,196.31 471.46,185.61 472.54,175.17 473.61,165.24 474.68,155.34 475.75,145.86 476.82,136.68 477.89,135.32 478.96,139.53 480.04,143.33 481.11,146.65 482.18,150.08 483.25,153.18 484.32,155.99 485.39,158.84 486.47,161.46 487.54,163.73 488.61,165.69 489.68,167.76 490.75,170.02 491.82,172.58 492.9,175.58 493.97,178.15 495.04,180.16 496.11,181.48 497.18,182.14 498.25,182.4 499.33,182.11 500.4,181 501.47,179.35 502.54,176.92 503.61,173.63 504.68,169.35 505.76,164.01 506.83,157.84 507.9,151.7 508.97,145.22 510.04,138.88 511.11,132.56 512.19,126.32 513.26,120.28 514.33,114.94 515.4,110.67 516.47,106.98 517.54,103.79 518.61,101.02 519.69,98.45 520.76,95.79 521.83,93.1 522.9,90.32 523.97,87.39 525.04,85.35 526.12,84.57 527.19,84.69 528.26,85.96 529.33,88.27 530.4,91.71 531.47,96.3 532.55,102.22 533.62,109.01 534.69,115.95 535.76,123.33 536.83,130.45 537.9,137.39 538.98,143.7 540.05,149.65 541.12,155.03 542.19,160.03 543.26,164.92 544.33,169.94 545.41,174.79 546.48,179.58 547.55,184.5 548.62,190.16 549.69,196.71 550.76,204.23 551.83,211.21 552.91,217.01 553.98,222.07 555.05,226.26 556.12,229.71 557.19,232.58 558.26,235.01 559.34,236.94 560.41,238.4 561.48,239.28 562.55,240.15 563.62,241.08 564.69,242.1 565.77,243.7 566.84,245.41 567.91,247.54 568.98,249.42 570.05,251.26 571.12,252.84 572.2,254.46 573.27,255.95 574.34,257.77 575.41,259.61 576.48,261.42 577.55,262.93 578.63,264.56 579.7,266.64 580.77,268.66 581.84,270.77 582.91,272.9 583.98,275.11 585.05,277.21 586.13,279.4 587.2,281.78 588.27,284.46 589.34,287 590.41,289.54 591.48,292.21 592.56,294.94 593.63,297.67 594.7,300.3 595.77,302.92 596.84,305.5 597.91,308.17 598.99,310.7 600.06,313.11 601.13,315.27 602.2,317.21 603.27,318.91 604.34,320.58 605.42,321.99 606.49,323.25 607.56,324.73 608.63,326.47 609.7,328.41 610.77,330.31 611.85,332.63 612.92,335.05 613.99,337.5 615.06,339.84 616.13,342.3 617.2,344.76 618.28,347.06 619.35,349.14 620.42,351.22 621.49,353.36 622.56,355.5 623.63,357.53 624.7,359.46 625.78,361.53 626.85,363.73 627.92,366.07 628.99,368.5 630.06,371.01 631.13,373.57 632.21,376.27 633.28,378.83 634.35,381.31 635.42,383.59 636.49,385.68 637.56,387.69 638.64,389.47 639.71,391.09 640.78,392.23 641.85,392.96 642.92,393.21 643.99,392.98 645.07,392.49 646.14,391.8 647.21,390.96 648.28,390.02 649.35,388.88 650.42,387.55 651.5,385.95 652.57,384.19 653.64,382.39 654.71,380.58 655.78,378.93 656.85,377.33 657.92,375.81 659,374.45 660.07,373.15 661.14,372.02 662.21,371.06 663.28,370.3 664.35,369.46 665.43,368.3 666.5,366.77 667.57,365.13 668.64,363.51 669.71,362.24 670.78,361.34 671.86,360.62 672.93,360.14 674,359.94 675.07,359.94 676.14,360.28 677.21,360.92 678.29,361.84 679.36,363.04 680.43,364.3 681.5,365.45 682.57,366.48 683.64,367.39 684.72,368.14 685.79,368.73 686.86,369.37 687.93,369.91 689,370.52 690.07,371 691.14,371.7 692.22,372.89 693.29,374.56 694.36,376.73 695.43,379.19 696.5,381.62 697.57,384.04 698.65,386.48 699.72,388.83 700.79,391.07 701.86,393.08 702.93,394.9 704,396.6 705.08,398.21 706.15,399.6 707.22,400.97 708.29,402.33 709.36,403.63 710.43,404.94 711.51,406.28 712.58,407.57 713.65,408.8 714.72,410.08 715.79,411.18 716.86,412.27 717.94,413.34 719.01,414.29 720.08,415.14 721.15,415.84 722.22,416.54 723.29,417.19 724.37,417.78 725.44,418.3 726.51,418.87 727.58,419.32 728.65,419.7 729.72,420.02 730.79,420.24 731.87,420.36 732.94,420.39 734.01,420.36 735.08,420.39 736.15,420.46 737.22,420.48 738.3,420.61 739.37,420.81 740.44,420.99 741.51,421.17 742.58,421.33 743.65,421.51 744.73,421.72 745.8,421.92 746.87,422.22 747.94,422.64 749.01,423.05 750.08,423.59 751.16,424.17 752.23,424.78 753.3,425.44 754.37,426.19 755.44,426.97 756.51,427.84 757.59,428.75 758.66,429.63 759.73,430.49 760.8,431.25 761.87,431.82 762.94,431.99 764.01,431.83 765.09,431.28 766.16,430.78 767.23,430.4 768.3,430.05 769.37,429.74 770.44,429.48 771.52,429.26 772.59,429.14 773.66,429.09 774.73,429.08 775.8,429.18 776.87,429.28 777.95,429.34 779.02,429.44 780.09,429.52 781.16,429.62 782.23,429.74 783.3,429.82 784.38,429.93 785.45,430.16 786.52,430.51 787.59,430.91 788.66,431.47 789.73,432.38 790.81,433.61 791.88,435.07 792.95,436.44 794.02,437.69 795.09,438.85 796.16,439.92 797.23,440.92 798.31,441.81 799.38,442.65 800.45,443.37 801.52,443.95 802.59,444.47 803.66,444.92 804.74,445.35 805.81,445.78 806.88,446.22 807.95,446.59 809.02,446.95 810.09,447.3 811.17,447.64 812.24,447.91 813.31,448.14 814.38,448.42 815.45,448.73 816.52,449.02 817.6,449.28 818.67,449.53 819.74,449.78 820.81,450.01 821.88,450.2 822.95,450.42 824.03,450.64 825.1,450.9 826.17,451.09 827.24,451.27 828.31,451.49 829.38,451.69 830.46,451.86 831.53,452.03 832.6,452.2 833.67,452.32 834.74,452.47 835.81,452.61 836.88,452.75 837.96,452.87 839.03,453 840.1,453.16 841.17,453.29 842.24,453.39 843.31,453.45 844.39,453.5 845.46,453.56 846.53,453.58 847.6,453.59 848.67,453.59 849.74,453.56 850.82,453.44 851.89,453.28 852.96,453.14 854.03,452.96 855.1,452.75 856.17,452.53 857.25,452.29 858.32,452.03 859.39,451.73 860.46,451.49 861.53,451.24 862.6,450.99 863.68,450.77 864.75,450.56 865.82,450.35 866.89,450.09 867.96,449.85 869.03,449.63 870.1,449.43 871.18,449.24 872.25,449.04 873.32,448.89 874.39,448.77 875.46,448.7 876.53,448.66 877.61,448.71 878.68,448.77 879.75,448.86 880.82,448.96 881.89,449.08 882.96,449.16 884.04,449.25 885.11,449.35 886.18,449.45 887.25,449.5 888.32,449.54 889.39,449.57 890.47,449.55 891.54,449.52 892.61,449.49 893.68,449.51 894.75,449.52 895.82,449.56 896.9,449.55 897.97,449.57 899.04,449.64 900.11,449.68 901.18,449.74 902.25,449.78 903.32,449.82 904.4,449.82 905.47,449.86 906.54,449.86 907.61,449.78 908.68,449.61 909.75,449.42 910.83,449.12 911.9,448.5 912.97,447.57 914.04,446.73 915.11,445.94 916.18,445.18 917.26,444.47 918.33,443.62 919.4,442.47 920.47,441.01 921.54,439.21 922.61,437.19 923.69,435.08 924.76,432.81 925.83,430.3 926.9,427.7 927.97,425 929.04,422.21 930.12,419.37 931.19,416.67 932.26,414.08 933.33,411.74 934.4,409.56 935.47,407.42 936.55,405.3 937.62,403.32 938.69,401.67 939.76,400.54 940.83,399.52 941.9,398.61" fill="none" stroke="#007a00" stroke-width="1.8" stroke-linejoin="round"/><rect x="48" y="10.56" width="937.28" height="465.28" fill="none" stroke="#1a1a1a" stroke-width="1"/><path d="M43 463.04H48" stroke="#000" stroke-width="1.400"/><path d="M43 401.82H48" stroke="#000" stroke-width="1.400"/><path d="M43 340.61H48" stroke="#000" stroke-width="1.400"/><path d="M43 279.39H48" stroke="#000" stroke-width="1.400"/><path d="M43 218.18H48" stroke="#000" stroke-width="1.400"/><path d="M43 156.96H48" stroke="#000" stroke-width="1.400"/><path d="M43 95.74H48" stroke="#000" stroke-width="1.400"/><path d="M43 34.53H48" stroke="#000" stroke-width="1.400"/><path d="M91.04 475.84V480.84" stroke="#000" stroke-width="1.400"/><path d="M224.99 475.84V480.84" stroke="#000" stroke-width="1.400"/><path d="M358.94 475.84V480.84" stroke="#000" stroke-width="1.400"/><path d="M492.9 475.84V480.84" stroke="#000" stroke-width="1.400"/><path d="M626.85 475.84V480.84" stroke="#000" stroke-width="1.400"/><path d="M760.8 475.84V480.84" stroke="#000" stroke-width="1.400"/><path d="M894.75 475.84V480.84" stroke="#000" stroke-width="1.400"/><rect x="842.56" y="16.48" width="136" height="68.96" rx="3" fill="#fff" fill-opacity=".8" stroke="#d0d0d0" stroke-width="1.200"/><path d="M846.72 29.12H877.12" stroke="#0000ff" stroke-width="2.100"/><path d="M846.72 50.88H877.12" stroke="#ff0000" stroke-width="2.100"/><path d="M846.72 71.36H877.12" stroke="#008000" stroke-width="2.100"/></svg>
<span class="t dj" style="left:363.06px;top:1019.12px;font-size:13.3px;line-height:20px;color:#000;">0</span>
<span class="t dj" style="left:346.13px;top:957.9px;font-size:13.3px;line-height:20px;color:#000;">100</span>
<span class="t dj" style="left:346.13px;top:896.69px;font-size:13.3px;line-height:20px;color:#000;">200</span>
<span class="t dj" style="left:346.13px;top:835.47px;font-size:13.3px;line-height:20px;color:#000;">300</span>
<span class="t dj" style="left:346.13px;top:774.26px;font-size:13.3px;line-height:20px;color:#000;">400</span>
<span class="t dj" style="left:346.13px;top:713.04px;font-size:13.3px;line-height:20px;color:#000;">500</span>
<span class="t dj" style="left:346.13px;top:651.82px;font-size:13.3px;line-height:20px;color:#000;">600</span>
<span class="t dj" style="left:346.13px;top:590.61px;font-size:13.3px;line-height:20px;color:#000;">700</span>
<span class="t dj" style="left:420.89px;top:1049.84px;font-size:13.3px;line-height:20px;color:#000;">0</span>
<span class="t dj" style="left:542.15px;top:1049.84px;font-size:13.3px;line-height:20px;color:#000;">1000</span>
<span class="t dj" style="left:676.1px;top:1049.84px;font-size:13.3px;line-height:20px;color:#000;">2000</span>
<span class="t dj" style="left:810.05px;top:1049.84px;font-size:13.3px;line-height:20px;color:#000;">3000</span>
<span class="t dj" style="left:944px;top:1049.84px;font-size:13.3px;line-height:20px;color:#000;">4000</span>
<span class="t dj" style="left:1077.96px;top:1049.84px;font-size:13.3px;line-height:20px;color:#000;">5000</span>
<span class="t dj" style="left:1211.91px;top:1049.84px;font-size:13.3px;line-height:20px;color:#000;">6000</span>
<span class="t dj" style="left:1222.08px;top:585.04px;font-size:13.8px;line-height:20px;color:#000;">close Price</span>
<span class="t dj" style="left:1222.08px;top:606.8px;font-size:13.8px;line-height:20px;color:#000;">50-Day MA</span>
<span class="t dj" style="left:1222.08px;top:627.28px;font-size:13.8px;line-height:20px;color:#000;">200-Day MA</span>
</figure>
</section>
<section class="cell">
<div style="left:316.8px;top:1134.08px;width:2235.2px;height:37.12px;background:#262627;"></div>
<div class="t m cjk" style="left:354.88px;top:1143.92px;font-size:13.4px;line-height:20px;"><span style="color:#6a9955"># 计算 RSI</span></div>
</section>
</main>
<footer id="panel">
<div style="left:275.2px;top:1169.92px;width:2284.8px;height:190.08px;background:#1e1e1e;border-top:1px solid #454545;box-sizing:border-box;"></div>
<span class="t" style="left:294.72px;top:1177.2px;font-size:10.7px;line-height:20px;letter-spacing:-0.91px;color:#969696;">PROBLEMS</span>
<span class="t" style="left:390.72px;top:1177.2px;font-size:10.7px;line-height:20px;letter-spacing:-0.32px;color:#969696;">OUTPUT</span>
<span class="t" style="left:456.8px;top:1177.2px;font-size:10.7px;line-height:20px;letter-spacing:-0.57px;color:#969696;">DEBUG CONSOLE</span>
<span class="t" style="left:567.2px;top:1177.2px;font-size:10.7px;line-height:20px;letter-spacing:-0.42px;color:#e7e7e7;">TERMINAL</span>
<span class="t" style="left:643.2px;top:1177.2px;font-size:10.7px;line-height:20px;letter-spacing:-1.19px;color:#969696;">PORTS</span>
<span class="t" style="left:699.2px;top:1177.2px;font-size:10.7px;line-height:20px;letter-spacing:-0.85px;color:#969696;">AZURE</span>
<span class="t" style="left:758.08px;top:1177.2px;font-size:10.7px;line-height:20px;letter-spacing:-1.25px;color:#969696;">JUPYTER</span>
<span class="t" style="left:822.72px;top:1177.2px;font-size:10.7px;line-height:20px;letter-spacing:-0.53px;color:#969696;">SNOWFLAKE</span>
<span class="t" style="left:910.08px;top:1177.2px;font-size:10.7px;line-height:20px;letter-spacing:-0.32px;color:#969696;">COMMENTS</span>
<span class="t" style="left:995.2px;top:1177.2px;font-size:10.7px;line-height:20px;letter-spacing:-0.6px;color:#969696;">GITLENS</span>
<div style="left:352.32px;top:1178.88px;width:16.96px;height:16.96px;background:#3b82e0;border-radius:50%;"></div>
<span class="t" style="left:357.76px;top:1177.36px;font-size:7px;line-height:20px;color:#fff;">2</span>
<div style="left:564px;top:1197.44px;width:56.48px;height:1.12px;background:#e7e7e7;"></div>
<svg class="i" viewBox="0 0 16 16" style="left:2322.24px;top:1178.56px;width:17.28px;height:17.28px;"><rect x="2" y="2" width="12" height="12" rx="1.500" fill="none" stroke="#c5c5c5" stroke-width="1.200"/><path d="M5 5.500l3 2.500-3 2.500M9 11h3" fill="none" stroke="#c5c5c5" stroke-width="1.100"/></svg>
<span class="t" style="left:2344px;top:1177.2px;font-size:11.6px;line-height:20px;letter-spacing:-0.35px;color:#cccccc;">powershell</span>
<svg class="i" viewBox="0 0 16 16" style="left:2402.88px;top:1178.88px;width:16.64px;height:16.64px;"><path d="M8 2.500v11M2.500 8h11" stroke="#c5c5c5" stroke-width="1.300"/></svg>
<svg class="i" viewBox="0 0 16 16" style="left:2421.76px;top:1182.4px;width:10.88px;height:10.88px;"><path d="M3 5.500l5 5 5-5" fill="none" stroke="#c5c5c5" stroke-width="1.700"/></svg>
<svg class="i" viewBox="0 0 16 16" style="left:2440.48px;top:1178.88px;width:16.64px;height:16.64px;"><rect x="2" y="2.500" width="12" height="11" rx="1" fill="none" stroke="#c5c5c5" stroke-width="1.300"/><path d="M8 2.500v11" stroke="#c5c5c5" stroke-width="1.300"/></svg>
<svg class="i" viewBox="0 0 16 16" style="left:2464.96px;top:1178.88px;width:16.64px;height:16.64px;"><path d="M3.500 4.500h9v9.500h-9z" fill="#c5c5c5"/><path d="M2 4h12M6 2.500h4" stroke="#c5c5c5" stroke-width="1.300"/></svg>
<svg class="i" viewBox="0 0 16 16" style="left:2489.92px;top:1179.2px;width:16px;height:16px;"><circle cx="3" cy="8" r="1.100" fill="#777"/><circle cx="8" cy="8" r="1.100" fill="#777"/><circle cx="13" cy="8" r="1.100" fill="#777"/></svg>
<svg class="i" viewBox="0 0 16 16" style="left:2515.2px;top:1179.2px;width:16px;height:16px;"><path d="M3 10.500l5-5 5 5" fill="none" stroke="#c5c5c5" stroke-width="1.300"/></svg>
<svg class="i" viewBox="0 0 16 16" style="left:2541.12px;top:1179.2px;width:16px;height:16px;"><path d="M3 3l10 10M13 3L3 13" stroke="#c5c5c5" stroke-width="1.300"/></svg>
<section class="term">
<div class="t m tm" style="left:294.4px;top:1214.8px;font-size:12.33px;line-height:20px;"><span style="color:#dadada">no changes added to commit (use "git add" and/or "git commit -a")</span></div>
<div class="t m tm" style="left:294.4px;top:1232.05px;font-size:12.33px;line-height:20px;"><span style="color:#dadada">PS C:\Users\bishe\archive\GitHub\PBI&gt; </span><span style="color:#e5e510">git</span><span style="color:#dadada"> add data/AAPL_data.csv</span></div>
<div class="t m tm" style="left:294.4px;top:1249.3px;font-size:12.33px;line-height:20px;"><span style="color:#dadada">PS C:\Users\bishe\archive\GitHub\PBI&gt; </span><span style="color:#e5e510">git</span><span style="color:#dadada"> add data/NVDA_data.csv</span></div>
<div class="t m tm" style="left:294.4px;top:1266.54px;font-size:12.33px;line-height:20px;"><span style="color:#dadada">PS C:\Users\bishe\archive\GitHub\PBI&gt; </span><span style="color:#e5e510">git</span><span style="color:#dadada"> add .</span></div>
<div class="t m tm" style="left:294.4px;top:1283.79px;font-size:12.33px;line-height:20px;"><span style="color:#dadada">PS C:\Users\bishe\archive\GitHub\PBI&gt; </span><span style="color:#e5e510">git</span><span style="color:#dadada"> commit </span><span style="color:#7a7a7a">-m</span><span style="color:#dadada"> </span><span style="color:#3a96dd">"add two prediction model"</span></div>
<div class="t m tm" style="left:294.4px;top:1301.04px;font-size:12.33px;line-height:20px;"><span style="color:#dadada">[main 04a7487] add two prediction model</span></div>
<div class="t m tm" style="left:294.4px;top:1318.29px;font-size:12.33px;line-height:20px;"><span style="color:#dadada"> 2 files changed, 6 insertions(+)</span></div>
<div class="t m tm" style="left:294.4px;top:1335.54px;font-size:12.33px;line-height:20px;"><span style="color:#dadada">PS C:\Users\bishe\archive\GitHub\PBI&gt; </span><span style="color:#e5e510">git</span><span style="color:#dadada"> push origin</span></div>
<div class="t m tm" style="left:294.4px;top:1352.78px;font-size:12.33px;line-height:20px;"><span style="color:#dadada">Enumerating objects: 11, done.</span></div>
</section>
</footer>
</div></div></body></html>
